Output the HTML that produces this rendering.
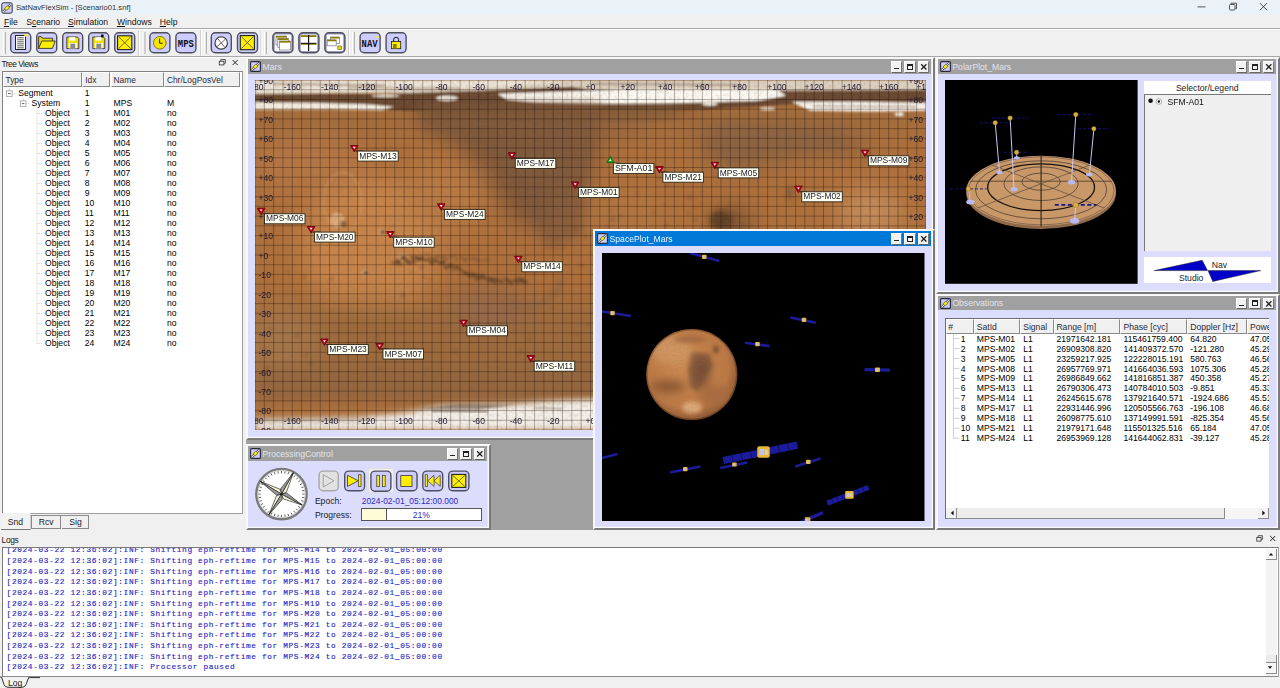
<!DOCTYPE html>
<html><head><meta charset="utf-8">
<style>
*{margin:0;padding:0;box-sizing:border-box}
html,body{width:1280px;height:688px;overflow:hidden;background:#f0f0f0;font-family:"Liberation Sans",sans-serif;font-size:8.5px;color:#000}
.a{position:absolute}
.t{position:absolute;white-space:pre;line-height:1}
.mono{font-family:"Liberation Mono",monospace}
.win{position:absolute;background:#dcdcfc;border-left:2px solid #f4f4f4;border-top:2px solid #f4f4f4;border-right:2px solid #7c7c7c;border-bottom:2px solid #7c7c7c}
.wt{position:absolute;left:0;top:0;height:14.5px;background:#a0a0a0}
.wt.act{background:#0078d7}
.wtt{position:absolute;left:14.5px;top:3.2px;font-size:8.6px;color:#dde2f2;white-space:pre;line-height:1}
.act .wtt{color:#eaf4ff}
.wico{position:absolute;left:2px;top:2px}
.wb{position:absolute;top:2px;width:11px;height:11px;background:#f0f0f0;border-right:1px solid #6a6a6a;border-bottom:1px solid #6a6a6a;border-top:1px solid #fff;border-left:1px solid #fff}

</style></head><body>
<div class="a" style="left:0;top:0;width:1280px;height:15.3px;background:#ebf2f7"></div>
<svg class="a" style="left:1px;top:2px" width="12" height="12" viewBox="0 0 12 12"><rect x="0.8" y="0.8" width="10.4" height="10.4" rx="1.5" fill="#ccccff" stroke="#333" stroke-width="1"/><line x1="2.2" y1="9.8" x2="9.8" y2="2.2" stroke="#222" stroke-width="2.2"/><line x1="2.2" y1="9.8" x2="9.8" y2="2.2" stroke="#f4f4f4" stroke-width="1.1"/><ellipse cx="6" cy="6" rx="2.5" ry="1.8" transform="rotate(-45 6 6)" fill="#f4f000" stroke="#333" stroke-width="0.5"/></svg>
<div class="t" style="left:16px;top:4.2px;font-size:7.65px;color:#333">SatNavFlexSim - [Scenario01.snf]</div>
<svg class="a" style="left:1190px;top:0" width="90" height="15" viewBox="1190 0 90 15"><line x1="1197.5" y1="6.9" x2="1205.5" y2="6.9" stroke="#555" stroke-width="1"/><rect x="1229.5" y="4.5" width="5.5" height="5.5" rx="1" fill="none" stroke="#444" stroke-width="0.9"/><path d="M1231,4.3 L1231,3.2 L1236.5,3.2 L1236.5,8.6 L1235.2,8.6" fill="none" stroke="#444" stroke-width="0.9"/><path d="M1260,3.2 L1267,10.2 M1267,3.2 L1260,10.2" stroke="#333" stroke-width="0.9"/></svg>
<div class="t" style="left:3.9px;top:17.6px;font-size:8.6px;color:#111"><u>F</u>ile</div>
<div class="t" style="left:26.2px;top:17.6px;font-size:8.6px;color:#111">S<u>c</u>enario</div>
<div class="t" style="left:68px;top:17.6px;font-size:8.6px;color:#111"><u>S</u>imulation</div>
<div class="t" style="left:116.9px;top:17.6px;font-size:8.6px;color:#111"><u>W</u>indows</div>
<div class="t" style="left:159.8px;top:17.6px;font-size:8.6px;color:#111"><u>H</u>elp</div>
<div class="a" style="left:0;top:28px;width:1280px;height:1px;background:#a8a8a8"></div>
<div class="a" style="left:0;top:29px;width:1280px;height:1px;background:#fff"></div>
<div class="a" style="left:0;top:56px;width:1280px;height:1px;background:#a8a8a8"></div>
<div class="a" style="left:0;top:57px;width:1280px;height:1px;background:#fff"></div>
<svg class="a" style="left:0;top:0" width="420" height="58" viewBox="0 0 420 58"><rect x="3" y="32" width="3" height="22" fill="#e4e4e4"/><line x1="3.5" y1="32" x2="3.5" y2="54" stroke="#fff"/><line x1="5.5" y1="32" x2="5.5" y2="54" stroke="#b4b4b4"/><rect x="142.5" y="32" width="3" height="22" fill="#e4e4e4"/><line x1="143.0" y1="32" x2="143.0" y2="54" stroke="#fff"/><line x1="145.0" y1="32" x2="145.0" y2="54" stroke="#b4b4b4"/><rect x="204" y="32" width="3" height="22" fill="#e4e4e4"/><line x1="204.5" y1="32" x2="204.5" y2="54" stroke="#fff"/><line x1="206.5" y1="32" x2="206.5" y2="54" stroke="#b4b4b4"/><rect x="264" y="32" width="3" height="22" fill="#e4e4e4"/><line x1="264.5" y1="32" x2="264.5" y2="54" stroke="#fff"/><line x1="266.5" y1="32" x2="266.5" y2="54" stroke="#b4b4b4"/><rect x="352" y="32" width="3" height="22" fill="#e4e4e4"/><line x1="352.5" y1="32" x2="352.5" y2="54" stroke="#fff"/><line x1="354.5" y1="32" x2="354.5" y2="54" stroke="#b4b4b4"/><line x1="138.5" y1="30" x2="138.5" y2="56" stroke="#d0d0d0"/><line x1="139.5" y1="30" x2="139.5" y2="56" stroke="#fff"/><line x1="200.5" y1="30" x2="200.5" y2="56" stroke="#d0d0d0"/><line x1="201.5" y1="30" x2="201.5" y2="56" stroke="#fff"/><line x1="261" y1="30" x2="261" y2="56" stroke="#d0d0d0"/><line x1="262" y1="30" x2="262" y2="56" stroke="#fff"/><line x1="348.5" y1="30" x2="348.5" y2="56" stroke="#d0d0d0"/><line x1="349.5" y1="30" x2="349.5" y2="56" stroke="#fff"/><rect x="10.7" y="32.7" width="20" height="20" rx="4" fill="#ccccff" stroke="#4e4e5e" stroke-width="1.4"/><rect x="15.5" y="35.5" width="10" height="14" fill="#fff" stroke="#222" stroke-width="1"/><line x1="17.2" y1="37.8" x2="23.8" y2="37.8" stroke="#333" stroke-width="0.8"/><line x1="17.2" y1="39.8" x2="23.8" y2="39.8" stroke="#333" stroke-width="0.8"/><line x1="17.2" y1="41.8" x2="23.8" y2="41.8" stroke="#333" stroke-width="0.8"/><line x1="17.2" y1="43.8" x2="23.8" y2="43.8" stroke="#333" stroke-width="0.8"/><line x1="17.2" y1="45.8" x2="23.8" y2="45.8" stroke="#333" stroke-width="0.8"/><line x1="17.2" y1="47.8" x2="23.8" y2="47.8" stroke="#333" stroke-width="0.8"/><circle cx="25.8" cy="35.3" r="1.4" fill="#ffee22"/><rect x="36.7" y="32.7" width="20" height="20" rx="4" fill="#ccccff" stroke="#4e4e5e" stroke-width="1.4"/><path d="M38.6,48.4 L38.6,36.6 L41.2,36.6 L42.2,38.2 L52.6,38.2 L52.6,41 Z" fill="#e8d800" stroke="#333" stroke-width="0.9"/><path d="M38.6,48.4 L41.8,41 L55.2,41 L52.4,48.4 Z" fill="#ffee00" stroke="#333" stroke-width="0.9"/><rect x="62.7" y="32.7" width="20" height="20" rx="4" fill="#ccccff" stroke="#4e4e5e" stroke-width="1.4"/><path d="M66.8,37 L77.3,37 L78.8,38.5 L78.8,48.6 L66.8,48.6 Z" fill="#f0e000" stroke="#333" stroke-width="0.9"/><rect x="69.3" y="37.2" width="6" height="3.4" fill="#fff"/><rect x="68.8" y="43" width="8" height="5.4" fill="#fff"/><rect x="70.3" y="43.6" width="5" height="4.8" fill="#8a8a8a"/><rect x="88.7" y="32.7" width="20" height="20" rx="4" fill="#ccccff" stroke="#4e4e5e" stroke-width="1.4"/><path d="M92.8,37 L103.3,37 L104.8,38.5 L104.8,48.6 L92.8,48.6 Z" fill="#f0e000" stroke="#333" stroke-width="0.9"/><rect x="95.3" y="37.2" width="6" height="3.4" fill="#fff"/><rect x="94.8" y="43" width="8" height="5.4" fill="#fff"/><rect x="96.3" y="43.6" width="5" height="4.8" fill="#8a8a8a"/><circle cx="102.3" cy="35.8" r="1.5" fill="#111"/><rect x="114.7" y="32.7" width="20" height="20" rx="4" fill="#ccccff" stroke="#4e4e5e" stroke-width="1.4"/><rect x="117.6" y="35.8" width="14.200000000000017" height="13.800000000000004" fill="#ffee00" stroke="#222" stroke-width="1.1"/><line x1="118.6" y1="36.8" x2="130.8" y2="48.6" stroke="#333" stroke-width="0.7"/><line x1="130.8" y1="36.8" x2="118.6" y2="48.6" stroke="#333" stroke-width="0.7"/><rect x="149.89999999999998" y="32.7" width="20" height="20" rx="4" fill="#ccccff" stroke="#4e4e5e" stroke-width="1.4"/><circle cx="159.8" cy="42.8" r="6.3" fill="#f4e600" stroke="#7a6e00" stroke-width="0.9"/><path d="M159.6,38.6 L159.6,43.2 L162.6,43.2" fill="none" stroke="#222" stroke-width="1"/><rect x="175.89999999999998" y="32.7" width="20" height="20" rx="4" fill="#ccccff" stroke="#4e4e5e" stroke-width="1.4"/><text x="185.8" y="46.6" text-anchor="middle" font-family="Liberation Mono" font-weight="bold" font-size="10" fill="#111" textLength="16" lengthAdjust="spacingAndGlyphs">MPS</text><rect x="211.29999999999998" y="32.7" width="20" height="20" rx="4" fill="#ccccff" stroke="#4e4e5e" stroke-width="1.4"/><circle cx="221.2" cy="42.9" r="6.2" fill="#fff" stroke="#333" stroke-width="1.1"/><line x1="217" y1="46.5" x2="225.4" y2="39.3" stroke="#444" stroke-width="0.8"/><line x1="218" y1="39" x2="224.5" y2="47" stroke="#444" stroke-width="0.8"/><rect x="237.5" y="32.7" width="20" height="20" rx="4" fill="#ccccff" stroke="#4e4e5e" stroke-width="1.4"/><rect x="240.3" y="35.6" width="14.099999999999994" height="14.100000000000001" fill="#ffee00" stroke="#222" stroke-width="1.1"/><line x1="241.3" y1="36.6" x2="253.4" y2="48.7" stroke="#333" stroke-width="0.7"/><line x1="253.4" y1="36.6" x2="241.3" y2="48.7" stroke="#333" stroke-width="0.7"/><rect x="272.9" y="32.7" width="20" height="20" rx="4" fill="#9a9ac0" stroke="#4e4e5e" stroke-width="1.4"/><rect x="274.7" y="34.5" width="16.5" height="16.5" rx="1.5" fill="#ffffff"/><rect x="276" y="36" width="10.5" height="9" fill="#fff" stroke="#777" stroke-width="0.7"/><rect x="276" y="36" width="10.5" height="1.6" fill="#8a7a00"/><rect x="277.8" y="38.4" width="10.5" height="9" fill="#fff" stroke="#777" stroke-width="0.7"/><rect x="277.8" y="38.4" width="10.5" height="1.6" fill="#8a7a00"/><rect x="279.5" y="41" width="11" height="9" fill="#fff" stroke="#777" stroke-width="0.7"/><rect x="279.5" y="41" width="11" height="1.6" fill="#8a7a00"/><rect x="298.9" y="32.7" width="20" height="20" rx="4" fill="#9a9ac0" stroke="#4e4e5e" stroke-width="1.4"/><rect x="300.7" y="34.5" width="16.5" height="16.5" rx="1.5" fill="#ffffff"/><rect x="300.8" y="35.2" width="15.6" height="1.8" fill="#8a7a00"/><rect x="300.8" y="43" width="15.6" height="1.8" fill="#8a7a00"/><line x1="308.6" y1="35" x2="308.6" y2="51" stroke="#111" stroke-width="1.2"/><line x1="300.8" y1="43.3" x2="316.4" y2="43.3" stroke="#111" stroke-width="1"/><rect x="324.9" y="32.7" width="20" height="20" rx="4" fill="#9a9ac0" stroke="#4e4e5e" stroke-width="1.4"/><rect x="326.7" y="34.5" width="16.5" height="16.5" rx="1.5" fill="#ffffff"/><rect x="330.5" y="37" width="9" height="6.5" fill="#fff" stroke="#777" stroke-width="0.7"/><rect x="330.5" y="37" width="9" height="1.5" fill="#8a7a00"/><rect x="327.2" y="39.8" width="9" height="6" fill="#fff" stroke="#777" stroke-width="0.7"/><rect x="327.2" y="39.8" width="9" height="1.5" fill="#8a7a00"/><rect x="337.8" y="46" width="3.6" height="3.6" fill="#e8d800" stroke="#555" stroke-width="0.6"/><rect x="360.09999999999997" y="32.7" width="20" height="20" rx="4" fill="#ccccff" stroke="#4e4e5e" stroke-width="1.4"/><text x="369.6" y="46.8" text-anchor="middle" font-family="Liberation Mono" font-weight="bold" font-size="10" fill="#111" textLength="16" lengthAdjust="spacingAndGlyphs">NAV</text><path d="M377.5,35.5 L379,37 L377.5,38.5 L376,37 Z" fill="#ffee00"/><rect x="386.09999999999997" y="32.7" width="20" height="20" rx="4" fill="#ccccff" stroke="#4e4e5e" stroke-width="1.4"/><path d="M393.6,42 L393.6,39.6 Q393.6,37.3 396.1,37.3 Q398.6,37.3 398.6,39.6 L398.6,42" fill="none" stroke="#111" stroke-width="1"/><rect x="391.5" y="41.5" width="9.2" height="7.2" fill="#ffee00" stroke="#222" stroke-width="0.8"/><rect x="393" y="44" width="3.6" height="4.4" fill="#8a7d00"/></svg>
<div class="a" style="left:246px;top:57px;width:689px;height:473px;background:#a0a0a0"></div>
<div class="a" style="left:246px;top:57px;width:689px;height:383px;background:#dcdcfc;border-left:2px solid #f8f8f8;border-top:2px solid #f8f8f8;border-right:2px solid #7a7a7a;border-bottom:2px solid #7a7a7a;box-shadow:inset -1.3px -1.3px 0 #fafafa"></div>
<div class="a" style="left:248px;top:59px;width:682.7px;height:14.5px;background:#a0a0a0"></div>
<svg class="a" style="left:250px;top:61px" width="11" height="11" viewBox="0 0 11 11"><rect x="0.6" y="0.6" width="9.8" height="9.8" rx="1" fill="#ccccff" stroke="#2a2a3a" stroke-width="1.1"/><line x1="1.8" y1="9.2" x2="9.2" y2="1.8" stroke="#222" stroke-width="2.2"/><line x1="1.8" y1="9.2" x2="9.2" y2="1.8" stroke="#f4f4f4" stroke-width="1.1"/><ellipse cx="5.5" cy="5.5" rx="2.3" ry="1.7" transform="rotate(-45 5.5 5.5)" fill="#f4f000" stroke="#333" stroke-width="0.5"/></svg>
<div class="t" style="left:262.6px;top:62.9px;font-size:8.6px;color:#e2e4ee">Mars</div>
<div class="a" style="left:890.7px;top:61px;width:11.6px;height:11.6px;background:#f2f2f2;border-top:1px solid #fff;border-left:1px solid #fff;border-right:1px solid #777;border-bottom:1.2px solid #666"></div>
<div class="a" style="left:904.3000000000001px;top:61px;width:11.6px;height:11.6px;background:#f2f2f2;border-top:1px solid #fff;border-left:1px solid #fff;border-right:1px solid #777;border-bottom:1.2px solid #666"></div>
<div class="a" style="left:917.6px;top:61px;width:11.6px;height:11.6px;background:#f2f2f2;border-top:1px solid #fff;border-left:1px solid #fff;border-right:1px solid #777;border-bottom:1.2px solid #666"></div>
<div class="a" style="left:894.3000000000001px;top:68.2px;width:4.4px;height:1.2px;background:#222"></div>
<div class="a" style="left:907.1px;top:63.6px;width:6.4px;height:6.2px;border:1px solid #222;border-top-width:2px"></div>
<svg class="a" style="left:917.6px;top:61px" width="12" height="12" viewBox="0 0 12 12"><path d="M3.2,3.3 L8.4,8.5 M8.4,3.3 L3.2,8.5" stroke="#222" stroke-width="1.3"/></svg><svg class="a" style="left:254.7px;top:80.2px" width="671.0" height="350.0" viewBox="254.7 80.2 671.0 350.0"><defs>
<filter id="b3" x="-20%" y="-20%" width="140%" height="140%"><feGaussianBlur stdDeviation="3"/></filter>
<filter id="b6" x="-20%" y="-20%" width="140%" height="140%"><feGaussianBlur stdDeviation="6"/></filter>
<filter id="b12" x="-30%" y="-30%" width="160%" height="160%"><feGaussianBlur stdDeviation="12"/></filter>
<filter id="b1"><feGaussianBlur stdDeviation="1"/></filter>
<filter id="noise" x="0" y="0" width="100%" height="100%"><feTurbulence type="fractalNoise" baseFrequency="0.35" numOctaves="2" seed="7"/><feColorMatrix values="0 0 0 0 0.3  0 0 0 0 0.18  0 0 0 0 0.08  0 0 0 -2.2 1.2"/></filter>
</defs><rect x="254.7" y="80.2" width="671.0" height="350.0" fill="#ae703c"/><g filter="url(#b12)"><ellipse cx="370.2611111111111" cy="245.47777777777776" rx="70" ry="68" fill="#c6844c"/><ellipse cx="310.6166666666667" cy="161.86666666666667" rx="55" ry="30" fill="#b47644"/><ellipse cx="444.81666666666666" cy="196.86666666666667" rx="40" ry="35" fill="#b87a44"/><ellipse cx="627.4777777777778" cy="226.03333333333336" rx="50" ry="40" fill="#b07440"/><rect x="254.7" y="107.42222222222222" width="671.0" height="27.22222222222223" fill="#a06c3e"/><ellipse cx="552.9222222222222" cy="122.97777777777779" rx="100" ry="12" fill="#8a6040"/><path d="M413.13055555555553,111.31111111111112 L571.5611111111111,111.31111111111112 L599.5194444444444,142.42222222222222 L575.2888888888889,192.97777777777776 L543.6027777777778,227.97777777777776 L511.91666666666663,220.2 L474.6388888888889,161.86666666666667 Z" fill="#80583a"/><path d="M692.713888888889,122.97777777777779 L851.1444444444444,126.86666666666667 L869.7833333333333,154.0888888888889 L795.2277777777779,157.97777777777776 L739.3111111111111,173.53333333333333 L702.0333333333333,157.97777777777776 Z" fill="#8e6440"/><rect x="254.7" y="301.8666666666667" width="671.0" height="97.22222222222223" fill="#9c6a3e"/><ellipse cx="487.68611111111113" cy="309.64444444444445" rx="40" ry="22" fill="#94684a"/><ellipse cx="282.6583333333333" cy="342.7" rx="35" ry="35" fill="#a47448"/><ellipse cx="731.8555555555556" cy="226.03333333333336" rx="16" ry="18" fill="#6a4830"/><ellipse cx="869.7833333333333" cy="212.42222222222222" rx="32" ry="24" fill="#c48c5a"/></g><g filter="url(#b3)"><path d="M720.6722222222222,122.97777777777779 L823.1861111111111,130.75555555555556 L851.1444444444444,148.25555555555556 L776.588888888889,150.2 L729.9916666666667,165.75555555555556 L705.7611111111112,146.31111111111113 Z" fill="#8a6242" opacity="0.7"/><ellipse cx="720.6722222222222" cy="220.2" rx="11" ry="10" fill="#5e4028"/><ellipse cx="789.6361111111112" cy="192.97777777777776" rx="3" ry="7" fill="#7a5638"/><path d="M562.2416666666667,278.53333333333336 Q552.9222222222222,313.53333333333336 506.325,303.81111111111113" stroke="#8a6446" stroke-width="6" fill="none" opacity="0.7"/></g><g filter="url(#b1)"><ellipse cx="342.30277777777775" cy="202.7" rx="19" ry="30" fill="none" stroke="#d09a68" stroke-width="2.5" opacity="0.5"/><circle cx="336.7111111111111" cy="220.2" r="7.5" fill="#dcaa78"/><circle cx="343.2347222222222" cy="224.0888888888889" r="3.2" fill="#7a5234" opacity="0.8"/><circle cx="381.44444444444446" cy="231.86666666666667" r="3.6" fill="#c89868"/><circle cx="382.44444444444446" cy="232.36666666666667" r="1.8" fill="#5e4028"/><circle cx="401.9472222222222" cy="257.14444444444445" r="3.6" fill="#c89868"/><circle cx="402.9472222222222" cy="257.64444444444445" r="1.8" fill="#5e4028"/><circle cx="364.6694444444444" cy="272.7" r="3.6" fill="#c89868"/><circle cx="365.6694444444444" cy="273.2" r="1.8" fill="#5e4028"/><ellipse cx="394.3" cy="263.3" rx="3.8" ry="1.3" transform="rotate(15 394.5 263.0)" fill="#5e4028" opacity="0.6"/><ellipse cx="397.1" cy="261.1" rx="3.0" ry="1.4" transform="rotate(24 396.7 262.6)" fill="#5e4028" opacity="0.6"/><ellipse cx="397.3" cy="261.3" rx="2.2" ry="1.6" transform="rotate(21 398.9 262.3)" fill="#5e4028" opacity="0.6"/><ellipse cx="399.3" cy="264.4" rx="3.9" ry="1.5" transform="rotate(18 401.1 262.0)" fill="#5e4028" opacity="0.6"/><ellipse cx="402.0" cy="259.3" rx="3.1" ry="0.9" transform="rotate(6 403.3 261.7)" fill="#5e4028" opacity="0.6"/><ellipse cx="404.5" cy="259.1" rx="2.9" ry="1.2" transform="rotate(25 405.5 261.5)" fill="#5e4028" opacity="0.6"/><ellipse cx="407.8" cy="261.9" rx="3.0" ry="1.5" transform="rotate(14 407.8 261.2)" fill="#5e4028" opacity="0.6"/><ellipse cx="409.1" cy="263.5" rx="4.0" ry="1.6" transform="rotate(21 410.0 261.0)" fill="#5e4028" opacity="0.6"/><ellipse cx="411.4" cy="259.5" rx="2.6" ry="0.9" transform="rotate(23 412.2 260.8)" fill="#5e4028" opacity="0.6"/><ellipse cx="414.0" cy="262.5" rx="2.8" ry="1.8" transform="rotate(25 414.4 260.7)" fill="#5e4028" opacity="0.6"/><ellipse cx="414.6" cy="259.2" rx="3.8" ry="1.3" transform="rotate(29 416.6 260.7)" fill="#5e4028" opacity="0.6"/><ellipse cx="418.4" cy="258.5" rx="3.3" ry="1.6" transform="rotate(8 418.8 260.6)" fill="#5e4028" opacity="0.6"/><ellipse cx="419.4" cy="259.8" rx="3.9" ry="1.6" transform="rotate(4 421.0 260.7)" fill="#5e4028" opacity="0.6"/><ellipse cx="422.2" cy="258.8" rx="2.1" ry="1.6" transform="rotate(5 423.2 260.8)" fill="#5e4028" opacity="0.6"/><ellipse cx="425.7" cy="260.6" rx="2.4" ry="1.5" transform="rotate(4 425.5 260.9)" fill="#5e4028" opacity="0.6"/><ellipse cx="428.2" cy="259.2" rx="2.8" ry="1.0" transform="rotate(8 427.7 261.1)" fill="#5e4028" opacity="0.6"/><ellipse cx="431.8" cy="262.9" rx="2.6" ry="1.7" transform="rotate(6 429.9 261.4)" fill="#5e4028" opacity="0.6"/><ellipse cx="431.7" cy="263.5" rx="3.3" ry="0.9" transform="rotate(30 432.1 261.7)" fill="#5e4028" opacity="0.6"/><ellipse cx="433.1" cy="260.9" rx="3.5" ry="1.1" transform="rotate(9 434.3 262.1)" fill="#5e4028" opacity="0.6"/><ellipse cx="434.8" cy="260.5" rx="3.2" ry="1.0" transform="rotate(18 436.5 262.5)" fill="#5e4028" opacity="0.6"/><ellipse cx="438.2" cy="262.8" rx="3.9" ry="1.3" transform="rotate(17 438.7 263.0)" fill="#5e4028" opacity="0.6"/><ellipse cx="442.4" cy="262.0" rx="2.3" ry="1.7" transform="rotate(25 440.9 263.6)" fill="#5e4028" opacity="0.6"/><ellipse cx="442.1" cy="262.6" rx="3.5" ry="1.7" transform="rotate(6 443.1 264.2)" fill="#5e4028" opacity="0.6"/><ellipse cx="447.2" cy="266.8" rx="3.2" ry="1.2" transform="rotate(3 445.4 264.8)" fill="#5e4028" opacity="0.6"/><ellipse cx="445.7" cy="267.9" rx="2.5" ry="1.5" transform="rotate(8 447.6 265.5)" fill="#5e4028" opacity="0.6"/><ellipse cx="451.1" cy="266.8" rx="2.6" ry="1.0" transform="rotate(22 449.8 266.3)" fill="#5e4028" opacity="0.6"/><ellipse cx="450.3" cy="265.7" rx="3.1" ry="1.7" transform="rotate(18 452.0 267.0)" fill="#5e4028" opacity="0.6"/><ellipse cx="453.3" cy="269.9" rx="2.4" ry="0.8" transform="rotate(8 454.2 267.8)" fill="#5e4028" opacity="0.6"/><ellipse cx="456.2" cy="266.5" rx="2.4" ry="1.2" transform="rotate(17 456.4 268.7)" fill="#5e4028" opacity="0.6"/><ellipse cx="457.1" cy="268.8" rx="3.8" ry="1.8" transform="rotate(20 458.6 269.5)" fill="#5e4028" opacity="0.6"/><ellipse cx="461.6" cy="270.8" rx="2.3" ry="0.8" transform="rotate(1 460.8 270.4)" fill="#5e4028" opacity="0.6"/><ellipse cx="464.7" cy="272.2" rx="3.9" ry="0.8" transform="rotate(19 463.0 271.2)" fill="#5e4028" opacity="0.6"/><ellipse cx="465.2" cy="273.2" rx="2.6" ry="1.8" transform="rotate(2 465.3 272.1)" fill="#5e4028" opacity="0.6"/><ellipse cx="467.7" cy="274.1" rx="3.8" ry="1.5" transform="rotate(21 467.5 272.9)" fill="#5e4028" opacity="0.6"/><ellipse cx="470.9" cy="275.8" rx="2.7" ry="1.5" transform="rotate(27 469.7 273.8)" fill="#5e4028" opacity="0.6"/><ellipse cx="473.4" cy="274.2" rx="3.6" ry="1.7" transform="rotate(17 471.9 274.6)" fill="#5e4028" opacity="0.6"/><ellipse cx="474.6" cy="274.8" rx="3.2" ry="1.4" transform="rotate(2 474.1 275.4)" fill="#5e4028" opacity="0.6"/><ellipse cx="476.9" cy="278.6" rx="3.8" ry="1.5" transform="rotate(12 476.3 276.1)" fill="#5e4028" opacity="0.6"/><ellipse cx="479.5" cy="277.3" rx="2.9" ry="1.6" transform="rotate(3 478.5 276.9)" fill="#5e4028" opacity="0.6"/><ellipse cx="481.7" cy="275.2" rx="3.2" ry="1.3" transform="rotate(7 480.7 277.5)" fill="#5e4028" opacity="0.6"/><ellipse cx="483.7" cy="278.2" rx="3.2" ry="1.7" transform="rotate(8 482.9 278.2)" fill="#5e4028" opacity="0.6"/><ellipse cx="483.2" cy="277.8" rx="3.4" ry="1.0" transform="rotate(5 485.2 278.8)" fill="#5e4028" opacity="0.6"/><ellipse cx="489.0" cy="280.1" rx="2.9" ry="1.7" transform="rotate(10 487.4 279.3)" fill="#5e4028" opacity="0.6"/><ellipse cx="490.2" cy="278.3" rx="2.9" ry="1.6" transform="rotate(27 489.6 279.8)" fill="#5e4028" opacity="0.6"/><ellipse cx="493.3" cy="279.7" rx="3.2" ry="1.1" transform="rotate(4 491.8 280.2)" fill="#5e4028" opacity="0.6"/><ellipse cx="494.0" cy="282.3" rx="3.7" ry="1.5" transform="rotate(29 494.0 280.6)" fill="#5e4028" opacity="0.6"/><ellipse cx="495.3" cy="279.3" rx="2.9" ry="1.1" transform="rotate(6 496.2 280.9)" fill="#5e4028" opacity="0.6"/><ellipse cx="498.1" cy="281.8" rx="3.0" ry="1.1" transform="rotate(25 498.4 281.2)" fill="#5e4028" opacity="0.6"/><ellipse cx="502.6" cy="281.1" rx="2.1" ry="0.8" transform="rotate(26 500.6 281.4)" fill="#5e4028" opacity="0.6"/><ellipse cx="501.0" cy="282.6" rx="3.1" ry="1.1" transform="rotate(24 502.8 281.5)" fill="#5e4028" opacity="0.6"/><ellipse cx="503.1" cy="279.8" rx="2.9" ry="0.8" transform="rotate(25 505.1 281.6)" fill="#5e4028" opacity="0.6"/><ellipse cx="506.2" cy="279.8" rx="2.1" ry="1.4" transform="rotate(13 507.3 281.6)" fill="#5e4028" opacity="0.6"/><ellipse cx="510.0" cy="282.4" rx="3.6" ry="1.8" transform="rotate(21 509.5 281.6)" fill="#5e4028" opacity="0.6"/><ellipse cx="510.5" cy="281.4" rx="2.4" ry="0.8" transform="rotate(14 511.7 281.5)" fill="#5e4028" opacity="0.6"/><ellipse cx="514.8" cy="279.8" rx="2.5" ry="1.1" transform="rotate(21 513.9 281.4)" fill="#5e4028" opacity="0.6"/><ellipse cx="516.2" cy="281.8" rx="3.5" ry="1.2" transform="rotate(24 516.1 281.2)" fill="#5e4028" opacity="0.6"/><ellipse cx="520.0" cy="278.9" rx="3.9" ry="1.5" transform="rotate(4 518.3 281.0)" fill="#5e4028" opacity="0.6"/><ellipse cx="520.4" cy="281.4" rx="3.8" ry="1.2" transform="rotate(17 520.5 280.7)" fill="#5e4028" opacity="0.6"/><ellipse cx="524.3" cy="281.9" rx="3.9" ry="1.3" transform="rotate(20 522.8 280.5)" fill="#5e4028" opacity="0.6"/><ellipse cx="523.8" cy="281.3" rx="3.6" ry="1.4" transform="rotate(22 525.0 280.2)" fill="#5e4028" opacity="0.6"/><ellipse cx="412.0" cy="256.8" rx="3.0" ry="1.4" fill="#6a4a32" opacity="0.5"/><ellipse cx="416.4" cy="256.6" rx="2.0" ry="1.3" fill="#6a4a32" opacity="0.5"/><ellipse cx="420.8" cy="255.1" rx="1.6" ry="1.0" fill="#6a4a32" opacity="0.5"/><ellipse cx="422.7" cy="257.0" rx="2.2" ry="0.7" fill="#6a4a32" opacity="0.5"/><ellipse cx="426.8" cy="254.4" rx="2.7" ry="0.8" fill="#6a4a32" opacity="0.5"/><ellipse cx="428.0" cy="257.6" rx="1.7" ry="0.8" fill="#6a4a32" opacity="0.5"/><ellipse cx="431.8" cy="257.6" rx="2.8" ry="1.2" fill="#6a4a32" opacity="0.5"/><ellipse cx="436.7" cy="256.9" rx="2.9" ry="0.8" fill="#6a4a32" opacity="0.5"/><ellipse cx="436.9" cy="257.3" rx="1.9" ry="1.2" fill="#6a4a32" opacity="0.5"/><ellipse cx="441.6" cy="257.5" rx="2.8" ry="1.1" fill="#6a4a32" opacity="0.5"/><ellipse cx="443.4" cy="257.2" rx="2.8" ry="1.3" fill="#6a4a32" opacity="0.5"/><ellipse cx="446.1" cy="259.3" rx="3.0" ry="1.1" fill="#6a4a32" opacity="0.5"/><ellipse cx="450.7" cy="256.9" rx="2.3" ry="1.1" fill="#6a4a32" opacity="0.5"/><ellipse cx="453.9" cy="256.5" rx="3.0" ry="1.1" fill="#6a4a32" opacity="0.5"/><ellipse cx="456.2" cy="259.8" rx="2.3" ry="1.0" fill="#6a4a32" opacity="0.5"/><ellipse cx="460.5" cy="257.1" rx="2.3" ry="1.0" fill="#6a4a32" opacity="0.5"/><ellipse cx="464.7" cy="260.8" rx="1.9" ry="1.0" fill="#6a4a32" opacity="0.5"/><ellipse cx="464.4" cy="259.1" rx="2.7" ry="1.3" fill="#6a4a32" opacity="0.5"/><ellipse cx="469.0" cy="258.8" rx="1.8" ry="1.1" fill="#6a4a32" opacity="0.5"/><ellipse cx="473.9" cy="258.3" rx="2.7" ry="0.7" fill="#6a4a32" opacity="0.5"/><ellipse cx="474.0" cy="259.0" rx="2.5" ry="0.9" fill="#6a4a32" opacity="0.5"/><ellipse cx="477.8" cy="260.8" rx="1.7" ry="1.2" fill="#6a4a32" opacity="0.5"/><ellipse cx="480.0" cy="260.6" rx="1.9" ry="0.8" fill="#6a4a32" opacity="0.5"/><ellipse cx="484.7" cy="260.5" rx="2.1" ry="1.0" fill="#6a4a32" opacity="0.5"/><ellipse cx="487.8" cy="259.7" rx="1.8" ry="1.1" fill="#6a4a32" opacity="0.5"/><circle cx="683.1" cy="326.2" r="1.9" fill="#7a5032" opacity="0.5"/><circle cx="682.5" cy="325.6" r="1.3" fill="#c08c60" opacity="0.3"/><circle cx="829.6" cy="364.9" r="2.3" fill="#7a5032" opacity="0.5"/><circle cx="829.0" cy="364.3" r="1.6" fill="#c08c60" opacity="0.3"/><circle cx="860.4" cy="354.0" r="2.5" fill="#7a5032" opacity="0.5"/><circle cx="859.8" cy="353.4" r="1.7" fill="#c08c60" opacity="0.3"/><circle cx="401.1" cy="265.1" r="1.0" fill="#7a5032" opacity="0.5"/><circle cx="400.5" cy="264.5" r="0.7" fill="#c08c60" opacity="0.3"/><circle cx="567.4" cy="190.5" r="1.6" fill="#7a5032" opacity="0.5"/><circle cx="566.8" cy="189.9" r="1.1" fill="#c08c60" opacity="0.3"/><circle cx="784.7" cy="378.8" r="2.0" fill="#7a5032" opacity="0.5"/><circle cx="784.1" cy="378.2" r="1.4" fill="#c08c60" opacity="0.3"/><circle cx="266.6" cy="369.0" r="2.4" fill="#7a5032" opacity="0.5"/><circle cx="266.0" cy="368.4" r="1.7" fill="#c08c60" opacity="0.3"/><circle cx="904.5" cy="380.2" r="2.2" fill="#7a5032" opacity="0.5"/><circle cx="903.9" cy="379.6" r="1.5" fill="#c08c60" opacity="0.3"/><circle cx="563.4" cy="246.9" r="0.9" fill="#7a5032" opacity="0.5"/><circle cx="562.8" cy="246.3" r="0.6" fill="#c08c60" opacity="0.3"/><circle cx="624.9" cy="328.1" r="1.1" fill="#7a5032" opacity="0.5"/><circle cx="624.3" cy="327.5" r="0.7" fill="#c08c60" opacity="0.3"/><circle cx="378.5" cy="368.6" r="2.6" fill="#7a5032" opacity="0.5"/><circle cx="377.9" cy="368.0" r="1.8" fill="#c08c60" opacity="0.3"/><circle cx="694.8" cy="219.3" r="2.2" fill="#7a5032" opacity="0.5"/><circle cx="694.2" cy="218.7" r="1.5" fill="#c08c60" opacity="0.3"/><circle cx="474.0" cy="334.4" r="1.6" fill="#7a5032" opacity="0.5"/><circle cx="473.4" cy="333.8" r="1.1" fill="#c08c60" opacity="0.3"/><circle cx="657.9" cy="393.5" r="2.3" fill="#7a5032" opacity="0.5"/><circle cx="657.3" cy="392.9" r="1.6" fill="#c08c60" opacity="0.3"/><circle cx="376.3" cy="336.1" r="1.5" fill="#7a5032" opacity="0.5"/><circle cx="375.7" cy="335.5" r="1.1" fill="#c08c60" opacity="0.3"/><circle cx="385.6" cy="373.7" r="0.8" fill="#7a5032" opacity="0.5"/><circle cx="385.0" cy="373.1" r="0.6" fill="#c08c60" opacity="0.3"/><circle cx="854.0" cy="290.8" r="2.3" fill="#7a5032" opacity="0.5"/><circle cx="853.4" cy="290.2" r="1.6" fill="#c08c60" opacity="0.3"/><circle cx="677.0" cy="342.5" r="1.7" fill="#7a5032" opacity="0.5"/><circle cx="676.4" cy="341.9" r="1.2" fill="#c08c60" opacity="0.3"/><circle cx="688.8" cy="197.3" r="2.2" fill="#7a5032" opacity="0.5"/><circle cx="688.2" cy="196.7" r="1.5" fill="#c08c60" opacity="0.3"/><circle cx="801.3" cy="342.4" r="2.4" fill="#7a5032" opacity="0.5"/><circle cx="800.7" cy="341.8" r="1.7" fill="#c08c60" opacity="0.3"/><circle cx="720.9" cy="295.2" r="1.5" fill="#7a5032" opacity="0.5"/><circle cx="720.3" cy="294.6" r="1.1" fill="#c08c60" opacity="0.3"/><circle cx="739.6" cy="386.0" r="1.6" fill="#7a5032" opacity="0.5"/><circle cx="739.0" cy="385.4" r="1.2" fill="#c08c60" opacity="0.3"/><circle cx="261.8" cy="348.9" r="1.9" fill="#7a5032" opacity="0.5"/><circle cx="261.2" cy="348.3" r="1.3" fill="#c08c60" opacity="0.3"/><circle cx="410.4" cy="272.1" r="1.4" fill="#7a5032" opacity="0.5"/><circle cx="409.8" cy="271.5" r="1.0" fill="#c08c60" opacity="0.3"/><circle cx="697.4" cy="321.0" r="1.5" fill="#7a5032" opacity="0.5"/><circle cx="696.8" cy="320.4" r="1.1" fill="#c08c60" opacity="0.3"/><circle cx="925.6" cy="311.5" r="2.2" fill="#7a5032" opacity="0.5"/><circle cx="925.0" cy="310.9" r="1.5" fill="#c08c60" opacity="0.3"/><circle cx="912.3" cy="392.2" r="2.1" fill="#7a5032" opacity="0.5"/><circle cx="911.7" cy="391.6" r="1.5" fill="#c08c60" opacity="0.3"/><circle cx="582.1" cy="226.0" r="1.0" fill="#7a5032" opacity="0.5"/><circle cx="581.5" cy="225.4" r="0.7" fill="#c08c60" opacity="0.3"/><circle cx="423.0" cy="277.2" r="1.7" fill="#7a5032" opacity="0.5"/><circle cx="422.4" cy="276.6" r="1.2" fill="#c08c60" opacity="0.3"/><circle cx="903.6" cy="321.2" r="1.9" fill="#7a5032" opacity="0.5"/><circle cx="903.0" cy="320.6" r="1.4" fill="#c08c60" opacity="0.3"/><circle cx="797.9" cy="385.3" r="2.2" fill="#7a5032" opacity="0.5"/><circle cx="797.3" cy="384.7" r="1.5" fill="#c08c60" opacity="0.3"/><circle cx="623.3" cy="242.0" r="1.7" fill="#7a5032" opacity="0.5"/><circle cx="622.7" cy="241.4" r="1.2" fill="#c08c60" opacity="0.3"/><circle cx="664.8" cy="387.6" r="1.6" fill="#7a5032" opacity="0.5"/><circle cx="664.2" cy="387.0" r="1.1" fill="#c08c60" opacity="0.3"/><circle cx="608.2" cy="317.3" r="1.3" fill="#7a5032" opacity="0.5"/><circle cx="607.6" cy="316.7" r="0.9" fill="#c08c60" opacity="0.3"/><circle cx="659.8" cy="232.2" r="0.8" fill="#7a5032" opacity="0.5"/><circle cx="659.2" cy="231.6" r="0.6" fill="#c08c60" opacity="0.3"/><circle cx="665.4" cy="224.9" r="2.4" fill="#7a5032" opacity="0.5"/><circle cx="664.8" cy="224.3" r="1.7" fill="#c08c60" opacity="0.3"/><circle cx="756.9" cy="388.7" r="2.5" fill="#7a5032" opacity="0.5"/><circle cx="756.3" cy="388.1" r="1.8" fill="#c08c60" opacity="0.3"/><circle cx="304.0" cy="277.2" r="1.7" fill="#7a5032" opacity="0.5"/><circle cx="303.4" cy="276.6" r="1.2" fill="#c08c60" opacity="0.3"/><circle cx="907.7" cy="363.5" r="2.5" fill="#7a5032" opacity="0.5"/><circle cx="907.1" cy="362.9" r="1.7" fill="#c08c60" opacity="0.3"/><circle cx="739.7" cy="334.2" r="2.3" fill="#7a5032" opacity="0.5"/><circle cx="739.1" cy="333.6" r="1.6" fill="#c08c60" opacity="0.3"/><circle cx="659.7" cy="380.2" r="1.6" fill="#7a5032" opacity="0.5"/><circle cx="659.1" cy="379.6" r="1.1" fill="#c08c60" opacity="0.3"/><circle cx="391.4" cy="388.4" r="1.0" fill="#7a5032" opacity="0.5"/><circle cx="390.8" cy="387.8" r="0.7" fill="#c08c60" opacity="0.3"/><circle cx="551.9" cy="308.2" r="1.3" fill="#7a5032" opacity="0.5"/><circle cx="551.3" cy="307.6" r="0.9" fill="#c08c60" opacity="0.3"/><circle cx="645.4" cy="340.5" r="1.8" fill="#7a5032" opacity="0.5"/><circle cx="644.8" cy="339.9" r="1.2" fill="#c08c60" opacity="0.3"/><circle cx="924.1" cy="271.1" r="1.2" fill="#7a5032" opacity="0.5"/><circle cx="923.5" cy="270.5" r="0.9" fill="#c08c60" opacity="0.3"/><circle cx="331.1" cy="278.9" r="1.9" fill="#7a5032" opacity="0.5"/><circle cx="330.5" cy="278.3" r="1.3" fill="#c08c60" opacity="0.3"/><circle cx="495.7" cy="359.8" r="1.8" fill="#7a5032" opacity="0.5"/><circle cx="495.1" cy="359.2" r="1.3" fill="#c08c60" opacity="0.3"/><circle cx="651.7" cy="312.7" r="1.1" fill="#7a5032" opacity="0.5"/><circle cx="651.1" cy="312.1" r="0.8" fill="#c08c60" opacity="0.3"/><circle cx="421.8" cy="267.6" r="2.4" fill="#7a5032" opacity="0.5"/><circle cx="421.2" cy="267.0" r="1.7" fill="#c08c60" opacity="0.3"/><circle cx="616.3" cy="206.7" r="1.0" fill="#7a5032" opacity="0.5"/><circle cx="615.7" cy="206.1" r="0.7" fill="#c08c60" opacity="0.3"/><circle cx="653.8" cy="212.4" r="1.9" fill="#7a5032" opacity="0.5"/><circle cx="653.2" cy="211.8" r="1.4" fill="#c08c60" opacity="0.3"/><circle cx="604.2" cy="197.3" r="2.3" fill="#7a5032" opacity="0.5"/><circle cx="603.6" cy="196.7" r="1.6" fill="#c08c60" opacity="0.3"/><circle cx="304.6" cy="379.6" r="1.9" fill="#7a5032" opacity="0.5"/><circle cx="304.0" cy="379.0" r="1.3" fill="#c08c60" opacity="0.3"/><circle cx="770.5" cy="367.4" r="1.3" fill="#7a5032" opacity="0.5"/><circle cx="769.9" cy="366.8" r="0.9" fill="#c08c60" opacity="0.3"/><circle cx="798.1" cy="347.1" r="2.6" fill="#7a5032" opacity="0.5"/><circle cx="797.5" cy="346.5" r="1.8" fill="#c08c60" opacity="0.3"/><circle cx="473.0" cy="323.7" r="2.5" fill="#7a5032" opacity="0.5"/><circle cx="472.4" cy="323.1" r="1.7" fill="#c08c60" opacity="0.3"/><circle cx="683.4" cy="249.1" r="0.9" fill="#7a5032" opacity="0.5"/><circle cx="682.8" cy="248.5" r="0.7" fill="#c08c60" opacity="0.3"/><circle cx="633.3" cy="332.0" r="1.3" fill="#7a5032" opacity="0.5"/><circle cx="632.7" cy="331.4" r="0.9" fill="#c08c60" opacity="0.3"/><circle cx="651.6" cy="248.8" r="1.3" fill="#7a5032" opacity="0.5"/><circle cx="651.0" cy="248.2" r="0.9" fill="#c08c60" opacity="0.3"/><circle cx="574.2" cy="227.4" r="2.1" fill="#7a5032" opacity="0.5"/><circle cx="573.6" cy="226.8" r="1.5" fill="#c08c60" opacity="0.3"/><circle cx="500.6" cy="379.9" r="1.8" fill="#7a5032" opacity="0.5"/><circle cx="500.0" cy="379.3" r="1.3" fill="#c08c60" opacity="0.3"/><circle cx="871.1" cy="272.7" r="1.6" fill="#7a5032" opacity="0.5"/><circle cx="870.5" cy="272.1" r="1.1" fill="#c08c60" opacity="0.3"/><circle cx="793.5" cy="355.5" r="1.5" fill="#7a5032" opacity="0.5"/><circle cx="792.9" cy="354.9" r="1.1" fill="#c08c60" opacity="0.3"/><circle cx="606.9" cy="226.8" r="1.5" fill="#7a5032" opacity="0.5"/><circle cx="606.3" cy="226.2" r="1.0" fill="#c08c60" opacity="0.3"/><circle cx="637.0" cy="193.2" r="1.8" fill="#7a5032" opacity="0.5"/><circle cx="636.4" cy="192.6" r="1.2" fill="#c08c60" opacity="0.3"/><circle cx="666.1" cy="186.7" r="1.3" fill="#7a5032" opacity="0.5"/><circle cx="665.5" cy="186.1" r="0.9" fill="#c08c60" opacity="0.3"/><circle cx="269.6" cy="328.0" r="1.8" fill="#7a5032" opacity="0.5"/><circle cx="269.0" cy="327.4" r="1.3" fill="#c08c60" opacity="0.3"/><circle cx="903.2" cy="310.4" r="0.9" fill="#7a5032" opacity="0.5"/><circle cx="902.6" cy="309.8" r="0.6" fill="#c08c60" opacity="0.3"/><circle cx="565.1" cy="197.9" r="2.4" fill="#7a5032" opacity="0.5"/><circle cx="564.5" cy="197.3" r="1.7" fill="#c08c60" opacity="0.3"/><circle cx="664.1" cy="204.7" r="1.2" fill="#7a5032" opacity="0.5"/><circle cx="663.5" cy="204.1" r="0.9" fill="#c08c60" opacity="0.3"/><circle cx="402.6" cy="295.5" r="2.2" fill="#7a5032" opacity="0.5"/><circle cx="402.0" cy="294.9" r="1.5" fill="#c08c60" opacity="0.3"/><circle cx="519.3" cy="351.2" r="2.0" fill="#7a5032" opacity="0.5"/><circle cx="518.7" cy="350.6" r="1.4" fill="#c08c60" opacity="0.3"/><circle cx="585.9" cy="325.2" r="2.1" fill="#7a5032" opacity="0.5"/><circle cx="585.3" cy="324.6" r="1.5" fill="#c08c60" opacity="0.3"/><circle cx="868.6" cy="341.7" r="2.0" fill="#7a5032" opacity="0.5"/><circle cx="868.0" cy="341.1" r="1.4" fill="#c08c60" opacity="0.3"/><circle cx="827.4" cy="290.2" r="2.4" fill="#7a5032" opacity="0.5"/><circle cx="826.8" cy="289.6" r="1.7" fill="#c08c60" opacity="0.3"/><circle cx="897.4" cy="311.8" r="2.1" fill="#7a5032" opacity="0.5"/><circle cx="896.8" cy="311.2" r="1.5" fill="#c08c60" opacity="0.3"/><circle cx="793.0" cy="340.3" r="1.1" fill="#7a5032" opacity="0.5"/><circle cx="792.4" cy="339.7" r="0.7" fill="#c08c60" opacity="0.3"/><circle cx="752.1" cy="266.1" r="1.1" fill="#7a5032" opacity="0.5"/><circle cx="751.5" cy="265.5" r="0.8" fill="#c08c60" opacity="0.3"/><circle cx="697.5" cy="250.6" r="1.4" fill="#7a5032" opacity="0.5"/><circle cx="696.9" cy="250.0" r="0.9" fill="#c08c60" opacity="0.3"/><circle cx="331.7" cy="310.8" r="1.1" fill="#7a5032" opacity="0.5"/><circle cx="331.1" cy="310.2" r="0.8" fill="#c08c60" opacity="0.3"/><circle cx="296.5" cy="335.4" r="2.4" fill="#7a5032" opacity="0.5"/><circle cx="295.9" cy="334.8" r="1.7" fill="#c08c60" opacity="0.3"/><circle cx="585.3" cy="236.9" r="2.1" fill="#7a5032" opacity="0.5"/><circle cx="584.7" cy="236.3" r="1.5" fill="#c08c60" opacity="0.3"/><circle cx="594.8" cy="241.8" r="2.2" fill="#7a5032" opacity="0.5"/><circle cx="594.2" cy="241.2" r="1.5" fill="#c08c60" opacity="0.3"/><circle cx="463.9" cy="323.8" r="1.7" fill="#7a5032" opacity="0.5"/><circle cx="463.3" cy="323.2" r="1.2" fill="#c08c60" opacity="0.3"/><circle cx="429.5" cy="279.6" r="1.4" fill="#7a5032" opacity="0.5"/><circle cx="428.9" cy="279.0" r="1.0" fill="#c08c60" opacity="0.3"/><circle cx="622.0" cy="270.5" r="1.2" fill="#7a5032" opacity="0.5"/><circle cx="621.4" cy="269.9" r="0.8" fill="#c08c60" opacity="0.3"/><circle cx="288.1" cy="271.8" r="1.5" fill="#7a5032" opacity="0.5"/><circle cx="287.5" cy="271.2" r="1.0" fill="#c08c60" opacity="0.3"/><circle cx="700.6" cy="204.1" r="1.2" fill="#7a5032" opacity="0.5"/><circle cx="700.0" cy="203.5" r="0.9" fill="#c08c60" opacity="0.3"/><circle cx="262.0" cy="333.6" r="2.2" fill="#7a5032" opacity="0.5"/><circle cx="261.4" cy="333.0" r="1.6" fill="#c08c60" opacity="0.3"/><circle cx="576.3" cy="230.2" r="1.3" fill="#7a5032" opacity="0.5"/><circle cx="575.7" cy="229.6" r="0.9" fill="#c08c60" opacity="0.3"/><circle cx="838.0" cy="328.0" r="2.6" fill="#7a5032" opacity="0.5"/><circle cx="837.4" cy="327.4" r="1.8" fill="#c08c60" opacity="0.3"/><circle cx="667.8" cy="255.1" r="2.3" fill="#7a5032" opacity="0.5"/><circle cx="667.2" cy="254.5" r="1.6" fill="#c08c60" opacity="0.3"/><circle cx="593.2" cy="199.5" r="1.0" fill="#7a5032" opacity="0.5"/><circle cx="592.6" cy="198.9" r="0.7" fill="#c08c60" opacity="0.3"/><circle cx="576.8" cy="334.1" r="1.9" fill="#7a5032" opacity="0.5"/><circle cx="576.2" cy="333.5" r="1.3" fill="#c08c60" opacity="0.3"/><circle cx="830.0" cy="355.6" r="1.6" fill="#7a5032" opacity="0.5"/><circle cx="829.4" cy="355.0" r="1.1" fill="#c08c60" opacity="0.3"/><circle cx="869.8" cy="383.4" r="1.2" fill="#7a5032" opacity="0.5"/><circle cx="869.2" cy="382.8" r="0.8" fill="#c08c60" opacity="0.3"/><circle cx="677.0" cy="231.0" r="1.4" fill="#7a5032" opacity="0.5"/><circle cx="676.4" cy="230.4" r="1.0" fill="#c08c60" opacity="0.3"/><circle cx="305.7" cy="355.4" r="2.1" fill="#7a5032" opacity="0.5"/><circle cx="305.1" cy="354.8" r="1.5" fill="#c08c60" opacity="0.3"/><circle cx="611.7" cy="219.3" r="2.5" fill="#7a5032" opacity="0.5"/><circle cx="611.1" cy="218.7" r="1.8" fill="#c08c60" opacity="0.3"/><circle cx="609.2" cy="200.0" r="1.2" fill="#7a5032" opacity="0.5"/><circle cx="608.6" cy="199.4" r="0.9" fill="#c08c60" opacity="0.3"/><circle cx="700.8" cy="193.0" r="1.2" fill="#7a5032" opacity="0.5"/><circle cx="700.2" cy="192.4" r="0.8" fill="#c08c60" opacity="0.3"/><circle cx="668.1" cy="357.4" r="1.8" fill="#7a5032" opacity="0.5"/><circle cx="667.5" cy="356.8" r="1.2" fill="#c08c60" opacity="0.3"/><circle cx="454.8" cy="351.2" r="2.0" fill="#7a5032" opacity="0.5"/><circle cx="454.2" cy="350.6" r="1.4" fill="#c08c60" opacity="0.3"/><circle cx="426.8" cy="369.2" r="1.4" fill="#7a5032" opacity="0.5"/><circle cx="426.2" cy="368.6" r="1.0" fill="#c08c60" opacity="0.3"/><circle cx="888.8" cy="321.9" r="1.4" fill="#7a5032" opacity="0.5"/><circle cx="888.2" cy="321.3" r="1.0" fill="#c08c60" opacity="0.3"/><circle cx="567.0" cy="202.5" r="2.1" fill="#7a5032" opacity="0.5"/><circle cx="566.4" cy="201.9" r="1.5" fill="#c08c60" opacity="0.3"/><circle cx="375.4" cy="342.8" r="1.9" fill="#7a5032" opacity="0.5"/><circle cx="374.8" cy="342.2" r="1.3" fill="#c08c60" opacity="0.3"/><circle cx="571.4" cy="223.6" r="0.9" fill="#7a5032" opacity="0.5"/><circle cx="570.8" cy="223.0" r="0.7" fill="#c08c60" opacity="0.3"/><circle cx="872.4" cy="339.6" r="2.0" fill="#7a5032" opacity="0.5"/><circle cx="871.8" cy="339.0" r="1.4" fill="#c08c60" opacity="0.3"/><circle cx="769.3" cy="288.2" r="1.4" fill="#7a5032" opacity="0.5"/><circle cx="768.7" cy="287.6" r="1.0" fill="#c08c60" opacity="0.3"/><circle cx="531.2" cy="393.2" r="2.1" fill="#7a5032" opacity="0.5"/><circle cx="530.6" cy="392.6" r="1.4" fill="#c08c60" opacity="0.3"/><circle cx="913.6" cy="292.3" r="1.9" fill="#7a5032" opacity="0.5"/><circle cx="913.0" cy="291.7" r="1.3" fill="#c08c60" opacity="0.3"/><circle cx="267.1" cy="352.1" r="2.0" fill="#7a5032" opacity="0.5"/><circle cx="266.5" cy="351.5" r="1.4" fill="#c08c60" opacity="0.3"/><circle cx="326.0" cy="346.0" r="2.2" fill="#7a5032" opacity="0.5"/><circle cx="325.4" cy="345.4" r="1.6" fill="#c08c60" opacity="0.3"/><circle cx="667.2" cy="185.0" r="1.8" fill="#7a5032" opacity="0.5"/><circle cx="666.6" cy="184.4" r="1.3" fill="#c08c60" opacity="0.3"/><circle cx="659.3" cy="178.5" r="1.7" fill="#7a5032" opacity="0.5"/><circle cx="658.7" cy="177.9" r="1.2" fill="#c08c60" opacity="0.3"/><circle cx="693.8" cy="206.4" r="1.2" fill="#7a5032" opacity="0.5"/><circle cx="693.2" cy="205.8" r="0.8" fill="#c08c60" opacity="0.3"/><circle cx="310.6" cy="363.3" r="2.1" fill="#7a5032" opacity="0.5"/><circle cx="310.0" cy="362.7" r="1.4" fill="#c08c60" opacity="0.3"/><circle cx="475.6" cy="274.2" r="1.6" fill="#7a5032" opacity="0.5"/><circle cx="475.0" cy="273.6" r="1.1" fill="#c08c60" opacity="0.3"/><circle cx="687.7" cy="212.9" r="1.8" fill="#7a5032" opacity="0.5"/><circle cx="687.1" cy="212.3" r="1.3" fill="#c08c60" opacity="0.3"/><circle cx="630.7" cy="360.8" r="2.6" fill="#7a5032" opacity="0.5"/><circle cx="630.1" cy="360.2" r="1.8" fill="#c08c60" opacity="0.3"/><circle cx="675.9" cy="232.8" r="2.4" fill="#7a5032" opacity="0.5"/><circle cx="675.3" cy="232.2" r="1.7" fill="#c08c60" opacity="0.3"/><circle cx="416.3" cy="320.5" r="1.1" fill="#7a5032" opacity="0.5"/><circle cx="415.7" cy="319.9" r="0.8" fill="#c08c60" opacity="0.3"/><circle cx="579.8" cy="178.4" r="2.5" fill="#7a5032" opacity="0.5"/><circle cx="579.2" cy="177.8" r="1.7" fill="#c08c60" opacity="0.3"/><circle cx="696.5" cy="355.1" r="2.1" fill="#7a5032" opacity="0.5"/><circle cx="695.9" cy="354.5" r="1.5" fill="#c08c60" opacity="0.3"/><circle cx="510.8" cy="318.1" r="0.8" fill="#7a5032" opacity="0.5"/><circle cx="510.2" cy="317.5" r="0.6" fill="#c08c60" opacity="0.3"/><circle cx="610.5" cy="210.9" r="1.1" fill="#7a5032" opacity="0.5"/><circle cx="609.9" cy="210.3" r="0.8" fill="#c08c60" opacity="0.3"/><circle cx="603.5" cy="360.9" r="1.4" fill="#7a5032" opacity="0.5"/><circle cx="602.9" cy="360.3" r="1.0" fill="#c08c60" opacity="0.3"/><circle cx="685.3" cy="390.3" r="1.1" fill="#7a5032" opacity="0.5"/><circle cx="684.7" cy="389.7" r="0.7" fill="#c08c60" opacity="0.3"/><circle cx="898.4" cy="317.0" r="1.5" fill="#7a5032" opacity="0.5"/><circle cx="897.8" cy="316.4" r="1.1" fill="#c08c60" opacity="0.3"/><circle cx="673.3" cy="305.4" r="2.2" fill="#7a5032" opacity="0.5"/><circle cx="672.7" cy="304.8" r="1.5" fill="#c08c60" opacity="0.3"/><circle cx="580.7" cy="265.6" r="2.3" fill="#7a5032" opacity="0.5"/><circle cx="580.1" cy="265.0" r="1.6" fill="#c08c60" opacity="0.3"/><circle cx="529.2" cy="338.7" r="2.4" fill="#7a5032" opacity="0.5"/><circle cx="528.6" cy="338.1" r="1.7" fill="#c08c60" opacity="0.3"/><circle cx="607.6" cy="326.8" r="2.4" fill="#7a5032" opacity="0.5"/><circle cx="607.0" cy="326.2" r="1.7" fill="#c08c60" opacity="0.3"/><circle cx="469.9" cy="388.1" r="2.4" fill="#7a5032" opacity="0.5"/><circle cx="469.3" cy="387.5" r="1.7" fill="#c08c60" opacity="0.3"/><circle cx="745.9" cy="317.4" r="1.3" fill="#7a5032" opacity="0.5"/><circle cx="745.3" cy="316.8" r="0.9" fill="#c08c60" opacity="0.3"/><circle cx="619.6" cy="216.1" r="1.5" fill="#7a5032" opacity="0.5"/><circle cx="619.0" cy="215.5" r="1.1" fill="#c08c60" opacity="0.3"/><circle cx="289.6" cy="304.7" r="1.2" fill="#7a5032" opacity="0.5"/><circle cx="289.0" cy="304.1" r="0.9" fill="#c08c60" opacity="0.3"/><circle cx="563.1" cy="184.3" r="2.5" fill="#7a5032" opacity="0.5"/><circle cx="562.5" cy="183.7" r="1.8" fill="#c08c60" opacity="0.3"/><circle cx="701.4" cy="282.3" r="2.2" fill="#7a5032" opacity="0.5"/><circle cx="700.8" cy="281.7" r="1.6" fill="#c08c60" opacity="0.3"/></g><g filter="url(#b1)"><rect x="254.7" y="80.2" width="671.0" height="13" fill="#ddd0c0"/><path d="M254.7,94 L385.1722222222222,94 L478.3666666666667,91 L571.5611111111111,87 L590.2,90 L776.588888888889,91 L925.7,90 L925.7,104 L795.2277777777779,104 L702.0333333333333,110 L590.2,110 L478.3666666666667,114 L403.81111111111113,111 L254.7,103 Z" fill="#6a4a32"/><path d="M254.7,102.5 L310.6166666666667,103 L366.5333333333333,104.5 L394.4916666666667,107 L381.44444444444446,110.5 L329.25555555555553,109.5 L254.7,110 Z" fill="#f3ede2"/><path d="M254.7,80.2 L571.5611111111111,80.2 L515.6444444444444,86 L403.81111111111113,91 L310.6166666666667,93.5 L254.7,94 Z" fill="#ece4d8"/><path d="M273.3388888888889,84 L385.1722222222222,85.5" stroke="#8a6a50" stroke-width="1.3"/><path d="M347.89444444444445,88 L459.72777777777776,88.5" stroke="#9a7a60" stroke-width="1"/><ellipse cx="446.68055555555554" cy="98.5" rx="11" ry="2.6" fill="#f8f4ec"/><ellipse cx="385.1722222222222" cy="96" rx="14" ry="1.5" fill="#e8dccc"/><path d="M497.00555555555553,94 L552.9222222222222,92 L627.4777777777778,90 L702.0333333333333,89.5 L776.588888888889,90 L785.9083333333333,96 L757.95,101 L664.7555555555555,104 L590.2,104.5 L534.2833333333333,103 L506.325,100 Z" fill="#fbf8f2"/><path d="M590.2,84 L739.3111111111111,85" stroke="#8a7060" stroke-width="1.2"/><ellipse cx="709.4888888888888" cy="104.3" rx="8" ry="1.6" fill="#f4eee6"/><path d="M791.5,102 L851.1444444444444,102 L925.7,103 L925.7,111 L869.7833333333333,112 L810.1388888888889,111 L798.9555555555555,106 Z" fill="#f6f1ea"/><path d="M813.8666666666666,106.5 L916.3805555555555,107" stroke="#8a6a50" stroke-width="1.1"/><ellipse cx="767.2694444444444" cy="109" rx="8" ry="1.6" fill="#f0e8dc"/><ellipse cx="899" cy="114.4" rx="4.5" ry="2" fill="#f4eee6"/></g><g filter="url(#b6)"><path d="M420,104 L600,104 L592,150 L582,236 L548,250 L505,165 L470,140 L420,130 Z" fill="#7e5a3c" opacity="0.75"/></g><g filter="url(#b6)"><path d="M403.81111111111113,106 L702.0333333333333,106 L664.7555555555555,118 L552.9222222222222,120 L441.08888888888885,116 Z" fill="#7a5638" opacity="0.8"/></g><g filter="url(#b6)"><rect x="254.7" y="367.97777777777776" width="671.0" height="33.05555555555554" fill="#8a6040" opacity="0.55"/></g><g filter="url(#b3)"><path d="M254.7,430.2 L254.7,419 L310.6166666666667,418 L357.21388888888885,417 L385.1722222222222,415 L403.81111111111113,413 L441.08888888888885,406 L515.6444444444444,404 L552.9222222222222,401 L590.2,399.5 L925.7,399 L925.7,430.2 Z" fill="#f2eee8"/><path d="M254.7,421 L366.5333333333333,420" stroke="#7a6a5a" stroke-width="1.6"/></g><g filter="url(#b1)"><path d="M413.13055555555553,409 L459.72777777777776,404 L515.6444444444444,405 L478.3666666666667,410 Z" fill="#7a6a5a" opacity="0.7"/><path d="M431.76944444444445,411 L487.68611111111113,412" stroke="#6a5a4a" stroke-width="1.2"/><path d="M534.2833333333333,408 L562.2416666666667,409" stroke="#8a7a6a" stroke-width="1"/></g><rect x="254.7" y="80.2" width="671.0" height="350.0" filter="url(#noise)" opacity="0.2"/><path d="M254.70,80.2V430.2M264.02,80.2V430.2M273.34,80.2V430.2M282.66,80.2V430.2M291.98,80.2V430.2M301.30,80.2V430.2M310.62,80.2V430.2M319.94,80.2V430.2M329.26,80.2V430.2M338.57,80.2V430.2M347.89,80.2V430.2M357.21,80.2V430.2M366.53,80.2V430.2M375.85,80.2V430.2M385.17,80.2V430.2M394.49,80.2V430.2M403.81,80.2V430.2M413.13,80.2V430.2M422.45,80.2V430.2M431.77,80.2V430.2M441.09,80.2V430.2M450.41,80.2V430.2M459.73,80.2V430.2M469.05,80.2V430.2M478.37,80.2V430.2M487.69,80.2V430.2M497.01,80.2V430.2M506.32,80.2V430.2M515.64,80.2V430.2M524.96,80.2V430.2M534.28,80.2V430.2M543.60,80.2V430.2M552.92,80.2V430.2M562.24,80.2V430.2M571.56,80.2V430.2M580.88,80.2V430.2M590.20,80.2V430.2M599.52,80.2V430.2M608.84,80.2V430.2M618.16,80.2V430.2M627.48,80.2V430.2M636.80,80.2V430.2M646.12,80.2V430.2M655.44,80.2V430.2M664.76,80.2V430.2M674.08,80.2V430.2M683.39,80.2V430.2M692.71,80.2V430.2M702.03,80.2V430.2M711.35,80.2V430.2M720.67,80.2V430.2M729.99,80.2V430.2M739.31,80.2V430.2M748.63,80.2V430.2M757.95,80.2V430.2M767.27,80.2V430.2M776.59,80.2V430.2M785.91,80.2V430.2M795.23,80.2V430.2M804.55,80.2V430.2M813.87,80.2V430.2M823.19,80.2V430.2M832.51,80.2V430.2M841.83,80.2V430.2M851.14,80.2V430.2M860.46,80.2V430.2M869.78,80.2V430.2M879.10,80.2V430.2M888.42,80.2V430.2M897.74,80.2V430.2M907.06,80.2V430.2M916.38,80.2V430.2M925.70,80.2V430.2M254.7,80.20H925.7M254.7,89.92H925.7M254.7,99.64H925.7M254.7,109.37H925.7M254.7,119.09H925.7M254.7,128.81H925.7M254.7,138.53H925.7M254.7,148.26H925.7M254.7,157.98H925.7M254.7,167.70H925.7M254.7,177.42H925.7M254.7,187.14H925.7M254.7,196.87H925.7M254.7,206.59H925.7M254.7,216.31H925.7M254.7,226.03H925.7M254.7,235.76H925.7M254.7,245.48H925.7M254.7,255.20H925.7M254.7,264.92H925.7M254.7,274.64H925.7M254.7,284.37H925.7M254.7,294.09H925.7M254.7,303.81H925.7M254.7,313.53H925.7M254.7,323.26H925.7M254.7,332.98H925.7M254.7,342.70H925.7M254.7,352.42H925.7M254.7,362.14H925.7M254.7,371.87H925.7M254.7,381.59H925.7M254.7,391.31H925.7M254.7,401.03H925.7M254.7,410.76H925.7M254.7,420.48H925.7M254.7,430.20H925.7" stroke="#140800" stroke-opacity="0.34" stroke-width="0.9" fill="none"/><g font-family="Liberation Sans" font-size="8.6" fill="#1e1a30"><text x="254.7" y="90.4" text-anchor="middle">-180</text><text x="254.7" y="424.4" text-anchor="middle">-180</text><text x="292.0" y="90.4" text-anchor="middle">-160</text><text x="292.0" y="424.4" text-anchor="middle">-160</text><text x="329.3" y="90.4" text-anchor="middle">-140</text><text x="329.3" y="424.4" text-anchor="middle">-140</text><text x="366.5" y="90.4" text-anchor="middle">-120</text><text x="366.5" y="424.4" text-anchor="middle">-120</text><text x="403.8" y="90.4" text-anchor="middle">-100</text><text x="403.8" y="424.4" text-anchor="middle">-100</text><text x="441.1" y="90.4" text-anchor="middle">-80</text><text x="441.1" y="424.4" text-anchor="middle">-80</text><text x="478.4" y="90.4" text-anchor="middle">-60</text><text x="478.4" y="424.4" text-anchor="middle">-60</text><text x="515.6" y="90.4" text-anchor="middle">-40</text><text x="515.6" y="424.4" text-anchor="middle">-40</text><text x="552.9" y="90.4" text-anchor="middle">-20</text><text x="552.9" y="424.4" text-anchor="middle">-20</text><text x="590.2" y="90.4" text-anchor="middle">+0</text><text x="590.2" y="424.4" text-anchor="middle">+0</text><text x="627.5" y="90.4" text-anchor="middle">+20</text><text x="627.5" y="424.4" text-anchor="middle">+20</text><text x="664.8" y="90.4" text-anchor="middle">+40</text><text x="664.8" y="424.4" text-anchor="middle">+40</text><text x="702.0" y="90.4" text-anchor="middle">+60</text><text x="702.0" y="424.4" text-anchor="middle">+60</text><text x="739.3" y="90.4" text-anchor="middle">+80</text><text x="739.3" y="424.4" text-anchor="middle">+80</text><text x="776.6" y="90.4" text-anchor="middle">+100</text><text x="776.6" y="424.4" text-anchor="middle">+100</text><text x="813.9" y="90.4" text-anchor="middle">+120</text><text x="813.9" y="424.4" text-anchor="middle">+120</text><text x="851.1" y="90.4" text-anchor="middle">+140</text><text x="851.1" y="424.4" text-anchor="middle">+140</text><text x="888.4" y="90.4" text-anchor="middle">+160</text><text x="888.4" y="424.4" text-anchor="middle">+160</text><text x="925.7" y="90.4" text-anchor="middle">+180</text><text x="925.7" y="424.4" text-anchor="middle">+180</text><text x="258.2" y="84.1">+90</text><text x="908.2" y="84.1">+90</text><text x="258.2" y="103.5">+80</text><text x="908.2" y="103.5">+80</text><text x="258.2" y="123.0">+70</text><text x="908.2" y="123.0">+70</text><text x="258.2" y="142.4">+60</text><text x="908.2" y="142.4">+60</text><text x="258.2" y="161.9">+50</text><text x="908.2" y="161.9">+50</text><text x="258.2" y="181.3">+40</text><text x="908.2" y="181.3">+40</text><text x="258.2" y="200.8">+30</text><text x="908.2" y="200.8">+30</text><text x="258.2" y="220.2">+20</text><text x="908.2" y="220.2">+20</text><text x="258.2" y="239.7">+10</text><text x="258.2" y="259.1">+0</text><text x="258.2" y="278.5">-10</text><text x="258.2" y="298.0">-20</text><text x="258.2" y="317.4">-30</text><text x="258.2" y="336.9">-40</text><text x="258.2" y="356.3">-50</text><text x="258.2" y="375.8">-60</text><text x="258.2" y="395.2">-70</text><text x="258.2" y="414.7">-80</text><text x="258.2" y="434.1">-90</text></g><g font-family="Liberation Sans"><path d="M355.4,151.3 L362.9,151.3 L358.9,151.3 Z" fill="#fffff4" stroke="#222" stroke-width="0.7"/><rect x="357.4" y="151.3" width="40.5" height="10" fill="#fffff2" stroke="#2a2418" stroke-width="0.9"/><path d="M356.0,152.10000000000002 L362.09999999999997,152.0 L359.5,152.0 Z" fill="#fffff2"/><text x="377.65" y="159.0" text-anchor="middle" font-size="8.6" fill="#1a1a2a" textLength="37.5" lengthAdjust="spacingAndGlyphs">MPS-M13</text><path d="M350.2,145.70000000000002 L357.79999999999995,145.70000000000002 L354.0,152.10000000000002 Z" fill="#c8001a" stroke="#6a0010" stroke-width="0.9"/><path d="M352.59999999999997,147.0 L355.4,147.0 L354.0,149.10000000000002 Z" fill="#fff"/><path d="M262.2,214 L269.7,214.0 L265.7,214.0 Z" fill="#fffff4" stroke="#222" stroke-width="0.7"/><rect x="264.2" y="214.0" width="40.5" height="10" fill="#fffff2" stroke="#2a2418" stroke-width="0.9"/><path d="M262.8,214.8 L268.9,214.7 L266.3,214.7 Z" fill="#fffff2"/><text x="284.45" y="221.7" text-anchor="middle" font-size="8.6" fill="#1a1a2a" textLength="37.5" lengthAdjust="spacingAndGlyphs">MPS-M06</text><path d="M257.0,208.4 L264.59999999999997,208.4 L260.8,214.8 Z" fill="#c8001a" stroke="#6a0010" stroke-width="0.9"/><path d="M259.4,209.7 L262.2,209.7 L260.8,211.8 Z" fill="#fff"/><path d="M312.25,232.3 L319.75,232.3 L315.75,232.3 Z" fill="#fffff4" stroke="#222" stroke-width="0.7"/><rect x="314.25" y="232.3" width="40.5" height="10" fill="#fffff2" stroke="#2a2418" stroke-width="0.9"/><path d="M312.85,233.10000000000002 L318.95,233.0 L316.35,233.0 Z" fill="#fffff2"/><text x="334.5" y="240.0" text-anchor="middle" font-size="8.6" fill="#1a1a2a" textLength="37.5" lengthAdjust="spacingAndGlyphs">MPS-M20</text><path d="M307.05,226.70000000000002 L314.65,226.70000000000002 L310.85,233.10000000000002 Z" fill="#c8001a" stroke="#6a0010" stroke-width="0.9"/><path d="M309.45,228.0 L312.25,228.0 L310.85,230.10000000000002 Z" fill="#fff"/><path d="M391.4,237.4 L398.9,237.4 L394.9,237.4 Z" fill="#fffff4" stroke="#222" stroke-width="0.7"/><rect x="393.4" y="237.4" width="40.5" height="10" fill="#fffff2" stroke="#2a2418" stroke-width="0.9"/><path d="M392.0,238.20000000000002 L398.09999999999997,238.1 L395.5,238.1 Z" fill="#fffff2"/><text x="413.65" y="245.1" text-anchor="middle" font-size="8.6" fill="#1a1a2a" textLength="37.5" lengthAdjust="spacingAndGlyphs">MPS-M10</text><path d="M386.2,231.8 L393.79999999999995,231.8 L390.0,238.20000000000002 Z" fill="#c8001a" stroke="#6a0010" stroke-width="0.9"/><path d="M388.59999999999997,233.1 L391.4,233.1 L390.0,235.20000000000002 Z" fill="#fff"/><path d="M442.3,209.6 L449.8,209.6 L445.8,209.6 Z" fill="#fffff4" stroke="#222" stroke-width="0.7"/><rect x="444.3" y="209.6" width="40.5" height="10" fill="#fffff2" stroke="#2a2418" stroke-width="0.9"/><path d="M442.90000000000003,210.4 L449.0,210.29999999999998 L446.40000000000003,210.29999999999998 Z" fill="#fffff2"/><text x="464.55" y="217.29999999999998" text-anchor="middle" font-size="8.6" fill="#1a1a2a" textLength="37.5" lengthAdjust="spacingAndGlyphs">MPS-M24</text><path d="M437.1,204.0 L444.7,204.0 L440.90000000000003,210.4 Z" fill="#c8001a" stroke="#6a0010" stroke-width="0.9"/><path d="M439.5,205.29999999999998 L442.3,205.29999999999998 L440.90000000000003,207.4 Z" fill="#fff"/><path d="M513.0,158.6 L520.5,158.6 L516.5,158.6 Z" fill="#fffff4" stroke="#222" stroke-width="0.7"/><rect x="515.0" y="158.6" width="40.5" height="10" fill="#fffff2" stroke="#2a2418" stroke-width="0.9"/><path d="M513.6,159.4 L519.7,159.29999999999998 L517.1,159.29999999999998 Z" fill="#fffff2"/><text x="535.25" y="166.29999999999998" text-anchor="middle" font-size="8.6" fill="#1a1a2a" textLength="37.5" lengthAdjust="spacingAndGlyphs">MPS-M17</text><path d="M507.8,153.0 L515.4,153.0 L511.6,159.4 Z" fill="#c8001a" stroke="#6a0010" stroke-width="0.9"/><path d="M510.2,154.29999999999998 L513.0,154.29999999999998 L511.6,156.4 Z" fill="#fff"/><path d="M576.3,187.8 L583.8,187.8 L579.8,187.8 Z" fill="#fffff4" stroke="#222" stroke-width="0.7"/><rect x="578.3" y="187.8" width="40.5" height="10" fill="#fffff2" stroke="#2a2418" stroke-width="0.9"/><path d="M576.9,188.60000000000002 L583.0,188.5 L580.4,188.5 Z" fill="#fffff2"/><text x="598.55" y="195.5" text-anchor="middle" font-size="8.6" fill="#1a1a2a" textLength="37.5" lengthAdjust="spacingAndGlyphs">MPS-M01</text><path d="M571.0999999999999,182.20000000000002 L578.6999999999999,182.20000000000002 L574.9,188.60000000000002 Z" fill="#c8001a" stroke="#6a0010" stroke-width="0.9"/><path d="M573.5,183.5 L576.3,183.5 L574.9,185.60000000000002 Z" fill="#fff"/><path d="M519.5,262 L527,262.0 L523,262.0 Z" fill="#fffff4" stroke="#222" stroke-width="0.7"/><rect x="521.5" y="262.0" width="40.5" height="10" fill="#fffff2" stroke="#2a2418" stroke-width="0.9"/><path d="M520.1,262.8 L526.2,262.7 L523.6,262.7 Z" fill="#fffff2"/><text x="541.75" y="269.7" text-anchor="middle" font-size="8.6" fill="#1a1a2a" textLength="37.5" lengthAdjust="spacingAndGlyphs">MPS-M14</text><path d="M514.3,256.4 L521.9,256.4 L518.1,262.8 Z" fill="#c8001a" stroke="#6a0010" stroke-width="0.9"/><path d="M516.7,257.7 L519.5,257.7 L518.1,259.8 Z" fill="#fff"/><path d="M464.7,326 L472.2,326.0 L468.2,326.0 Z" fill="#fffff4" stroke="#222" stroke-width="0.7"/><rect x="466.7" y="326.0" width="40.5" height="10" fill="#fffff2" stroke="#2a2418" stroke-width="0.9"/><path d="M465.3,326.8 L471.4,326.7 L468.8,326.7 Z" fill="#fffff2"/><text x="486.95" y="333.7" text-anchor="middle" font-size="8.6" fill="#1a1a2a" textLength="37.5" lengthAdjust="spacingAndGlyphs">MPS-M04</text><path d="M459.5,320.4 L467.09999999999997,320.4 L463.3,326.8 Z" fill="#c8001a" stroke="#6a0010" stroke-width="0.9"/><path d="M461.9,321.7 L464.7,321.7 L463.3,323.8 Z" fill="#fff"/><path d="M325.5,344.8 L333,344.8 L329,344.8 Z" fill="#fffff4" stroke="#222" stroke-width="0.7"/><rect x="327.5" y="344.8" width="40.5" height="10" fill="#fffff2" stroke="#2a2418" stroke-width="0.9"/><path d="M326.1,345.6 L332.2,345.5 L329.6,345.5 Z" fill="#fffff2"/><text x="347.75" y="352.5" text-anchor="middle" font-size="8.6" fill="#1a1a2a" textLength="37.5" lengthAdjust="spacingAndGlyphs">MPS-M23</text><path d="M320.3,339.2 L327.9,339.2 L324.1,345.6 Z" fill="#c8001a" stroke="#6a0010" stroke-width="0.9"/><path d="M322.7,340.5 L325.5,340.5 L324.1,342.6 Z" fill="#fff"/><path d="M380.7,349.2 L388.2,349.2 L384.2,349.2 Z" fill="#fffff4" stroke="#222" stroke-width="0.7"/><rect x="382.7" y="349.2" width="40.5" height="10" fill="#fffff2" stroke="#2a2418" stroke-width="0.9"/><path d="M381.3,350.0 L387.4,349.9 L384.8,349.9 Z" fill="#fffff2"/><text x="402.95" y="356.9" text-anchor="middle" font-size="8.6" fill="#1a1a2a" textLength="37.5" lengthAdjust="spacingAndGlyphs">MPS-M07</text><path d="M375.5,343.59999999999997 L383.09999999999997,343.59999999999997 L379.3,350.0 Z" fill="#c8001a" stroke="#6a0010" stroke-width="0.9"/><path d="M377.9,344.9 L380.7,344.9 L379.3,347.0 Z" fill="#fff"/><path d="M531.9,361.4 L539.4,361.4 L535.4,361.4 Z" fill="#fffff4" stroke="#222" stroke-width="0.7"/><rect x="533.9" y="361.4" width="40.5" height="10" fill="#fffff2" stroke="#2a2418" stroke-width="0.9"/><path d="M532.5,362.2 L538.6,362.09999999999997 L536.0,362.09999999999997 Z" fill="#fffff2"/><text x="554.15" y="369.09999999999997" text-anchor="middle" font-size="8.6" fill="#1a1a2a" textLength="37.5" lengthAdjust="spacingAndGlyphs">MPS-M11</text><path d="M526.6999999999999,355.79999999999995 L534.3,355.79999999999995 L530.5,362.2 Z" fill="#c8001a" stroke="#6a0010" stroke-width="0.9"/><path d="M529.1,357.09999999999997 L531.9,357.09999999999997 L530.5,359.2 Z" fill="#fff"/><path d="M660.6,172.4 L668.1,172.4 L664.1,172.4 Z" fill="#fffff4" stroke="#222" stroke-width="0.7"/><rect x="662.6" y="172.4" width="40.5" height="10" fill="#fffff2" stroke="#2a2418" stroke-width="0.9"/><path d="M661.2,173.20000000000002 L667.3000000000001,173.1 L664.7,173.1 Z" fill="#fffff2"/><text x="682.85" y="180.1" text-anchor="middle" font-size="8.6" fill="#1a1a2a" textLength="37.5" lengthAdjust="spacingAndGlyphs">MPS-M21</text><path d="M655.4,166.8 L663.0,166.8 L659.2,173.20000000000002 Z" fill="#c8001a" stroke="#6a0010" stroke-width="0.9"/><path d="M657.8000000000001,168.1 L660.6,168.1 L659.2,170.20000000000002 Z" fill="#fff"/><path d="M715.9,168.1 L723.4,168.1 L719.4,168.1 Z" fill="#fffff4" stroke="#222" stroke-width="0.7"/><rect x="717.9" y="168.1" width="40.5" height="10" fill="#fffff2" stroke="#2a2418" stroke-width="0.9"/><path d="M716.5,168.9 L722.6,168.79999999999998 L720.0,168.79999999999998 Z" fill="#fffff2"/><text x="738.15" y="175.79999999999998" text-anchor="middle" font-size="8.6" fill="#1a1a2a" textLength="37.5" lengthAdjust="spacingAndGlyphs">MPS-M05</text><path d="M710.6999999999999,162.5 L718.3,162.5 L714.5,168.9 Z" fill="#c8001a" stroke="#6a0010" stroke-width="0.9"/><path d="M713.1,163.79999999999998 L715.9,163.79999999999998 L714.5,165.9 Z" fill="#fff"/><path d="M866.1,156 L873.6,156.0 L869.6,156.0 Z" fill="#fffff4" stroke="#222" stroke-width="0.7"/><rect x="868.1" y="156.0" width="40.5" height="10" fill="#fffff2" stroke="#2a2418" stroke-width="0.9"/><path d="M866.7,156.8 L872.8000000000001,156.7 L870.2,156.7 Z" fill="#fffff2"/><text x="888.35" y="163.7" text-anchor="middle" font-size="8.6" fill="#1a1a2a" textLength="37.5" lengthAdjust="spacingAndGlyphs">MPS-M09</text><path d="M860.9,150.4 L868.5,150.4 L864.7,156.8 Z" fill="#c8001a" stroke="#6a0010" stroke-width="0.9"/><path d="M863.3000000000001,151.7 L866.1,151.7 L864.7,153.8 Z" fill="#fff"/><path d="M799.5,192 L807,192.0 L803,192.0 Z" fill="#fffff4" stroke="#222" stroke-width="0.7"/><rect x="801.5" y="192.0" width="40.5" height="10" fill="#fffff2" stroke="#2a2418" stroke-width="0.9"/><path d="M800.1,192.8 L806.2,192.7 L803.6,192.7 Z" fill="#fffff2"/><text x="821.75" y="199.7" text-anchor="middle" font-size="8.6" fill="#1a1a2a" textLength="37.5" lengthAdjust="spacingAndGlyphs">MPS-M02</text><path d="M794.3,186.4 L801.9,186.4 L798.1,192.8 Z" fill="#c8001a" stroke="#6a0010" stroke-width="0.9"/><path d="M796.7,187.7 L799.5,187.7 L798.1,189.8 Z" fill="#fff"/><path d="M611.5,162.2 L618.6,163.8 L614.6,163.8 Z" fill="#fffff4" stroke="#222" stroke-width="0.7"/><rect x="613.1" y="163.8" width="40.5" height="10" fill="#fffff2" stroke="#2a2418" stroke-width="0.9"/><path d="M612.1,163.0 L617.8000000000001,164.5 L615.2,164.5 Z" fill="#fffff2"/><text x="633.35" y="171.5" text-anchor="middle" font-size="8.6" fill="#1a1a2a" textLength="37.5" lengthAdjust="spacingAndGlyphs">SFM-A01</text><path d="M606.5,162.7 L613.5,162.7 L610,156.5 Z" fill="#20b020" stroke="#0a600a" stroke-width="0.8"/><path d="M608.8,161.2 L611.2,161.2 L610,159.2 Z" fill="#fff"/></g></svg><div class="t" style="left:1.4px;top:60.3px;font-size:8.4px;letter-spacing:-0.5px;color:#222">Tree Views</div>
<svg class="a" style="left:215px;top:57px" width="30" height="12" viewBox="215 57 30 12"><rect x="219.3" y="61.3" width="4.6" height="3.6" fill="none" stroke="#444" stroke-width="0.9"/><path d="M220.8,61 L220.8,59.6 L225.3,59.6 L225.3,63.4 L224.2,63.4" fill="none" stroke="#444" stroke-width="0.9"/><path d="M232.6,60 L237.6,65 M237.6,60 L232.6,65" stroke="#222" stroke-width="1"/></svg>
<div class="a" style="left:1.5px;top:71px;width:241.5px;height:443px;background:#fff;border-left:1px solid #828282;border-top:1px solid #828282;border-right:1px solid #a0a0a0;border-bottom:1px solid #a0a0a0"></div>
<div class="a" style="left:2.5px;top:72px;width:79.8px;height:15.3px;background:#f0f0f0;border-top:1px solid #fff;border-left:1px solid #fff;border-right:1.5px solid #8a8a8a;border-bottom:1.5px solid #8a8a8a"></div>
<div class="t" style="left:5.5px;top:76.2px;font-size:8.4px;color:#2a2a3a">Type</div>
<div class="a" style="left:82.3px;top:72px;width:28.200000000000003px;height:15.3px;background:#f0f0f0;border-top:1px solid #fff;border-left:1px solid #fff;border-right:1.5px solid #8a8a8a;border-bottom:1.5px solid #8a8a8a"></div>
<div class="t" style="left:85.3px;top:76.2px;font-size:8.4px;color:#2a2a3a">Idx</div>
<div class="a" style="left:110.5px;top:72px;width:53.400000000000006px;height:15.3px;background:#f0f0f0;border-top:1px solid #fff;border-left:1px solid #fff;border-right:1.5px solid #8a8a8a;border-bottom:1.5px solid #8a8a8a"></div>
<div class="t" style="left:113.5px;top:76.2px;font-size:8.4px;color:#2a2a3a">Name</div>
<div class="a" style="left:163.9px;top:72px;width:76.1px;height:15.3px;background:#f0f0f0;border-top:1px solid #fff;border-left:1px solid #fff;border-right:1.5px solid #8a8a8a;border-bottom:1.5px solid #8a8a8a"></div>
<div class="t" style="left:166.9px;top:76.2px;font-size:8.4px;color:#2a2a3a">Chr/LogPosVel</div>
<div class="t" style="left:18.2px;top:89.2px;font-size:8.6px">Segment</div>
<div class="t" style="left:84.8px;top:89.2px;font-size:8.6px">1</div>
<div class="t" style="left:31.6px;top:99.2px;font-size:8.6px">System</div>
<div class="t" style="left:84.8px;top:99.2px;font-size:8.6px">1</div>
<div class="t" style="left:113.5px;top:99.2px;font-size:8.6px">MPS</div>
<div class="t" style="left:167px;top:99.2px;font-size:8.6px">M</div>
<div class="t" style="left:45px;top:109.2px;font-size:8.6px">Object</div>
<div class="t" style="left:84.8px;top:109.2px;font-size:8.6px">1</div>
<div class="t" style="left:113.5px;top:109.2px;font-size:8.6px">M01</div>
<div class="t" style="left:167px;top:109.2px;font-size:8.6px">no</div>
<div class="t" style="left:45px;top:119.2px;font-size:8.6px">Object</div>
<div class="t" style="left:84.8px;top:119.2px;font-size:8.6px">2</div>
<div class="t" style="left:113.5px;top:119.2px;font-size:8.6px">M02</div>
<div class="t" style="left:167px;top:119.2px;font-size:8.6px">no</div>
<div class="t" style="left:45px;top:129.2px;font-size:8.6px">Object</div>
<div class="t" style="left:84.8px;top:129.2px;font-size:8.6px">3</div>
<div class="t" style="left:113.5px;top:129.2px;font-size:8.6px">M03</div>
<div class="t" style="left:167px;top:129.2px;font-size:8.6px">no</div>
<div class="t" style="left:45px;top:139.2px;font-size:8.6px">Object</div>
<div class="t" style="left:84.8px;top:139.2px;font-size:8.6px">4</div>
<div class="t" style="left:113.5px;top:139.2px;font-size:8.6px">M04</div>
<div class="t" style="left:167px;top:139.2px;font-size:8.6px">no</div>
<div class="t" style="left:45px;top:149.2px;font-size:8.6px">Object</div>
<div class="t" style="left:84.8px;top:149.2px;font-size:8.6px">5</div>
<div class="t" style="left:113.5px;top:149.2px;font-size:8.6px">M05</div>
<div class="t" style="left:167px;top:149.2px;font-size:8.6px">no</div>
<div class="t" style="left:45px;top:159.2px;font-size:8.6px">Object</div>
<div class="t" style="left:84.8px;top:159.2px;font-size:8.6px">6</div>
<div class="t" style="left:113.5px;top:159.2px;font-size:8.6px">M06</div>
<div class="t" style="left:167px;top:159.2px;font-size:8.6px">no</div>
<div class="t" style="left:45px;top:169.2px;font-size:8.6px">Object</div>
<div class="t" style="left:84.8px;top:169.2px;font-size:8.6px">7</div>
<div class="t" style="left:113.5px;top:169.2px;font-size:8.6px">M07</div>
<div class="t" style="left:167px;top:169.2px;font-size:8.6px">no</div>
<div class="t" style="left:45px;top:179.2px;font-size:8.6px">Object</div>
<div class="t" style="left:84.8px;top:179.2px;font-size:8.6px">8</div>
<div class="t" style="left:113.5px;top:179.2px;font-size:8.6px">M08</div>
<div class="t" style="left:167px;top:179.2px;font-size:8.6px">no</div>
<div class="t" style="left:45px;top:189.2px;font-size:8.6px">Object</div>
<div class="t" style="left:84.8px;top:189.2px;font-size:8.6px">9</div>
<div class="t" style="left:113.5px;top:189.2px;font-size:8.6px">M09</div>
<div class="t" style="left:167px;top:189.2px;font-size:8.6px">no</div>
<div class="t" style="left:45px;top:199.2px;font-size:8.6px">Object</div>
<div class="t" style="left:84.8px;top:199.2px;font-size:8.6px">10</div>
<div class="t" style="left:113.5px;top:199.2px;font-size:8.6px">M10</div>
<div class="t" style="left:167px;top:199.2px;font-size:8.6px">no</div>
<div class="t" style="left:45px;top:209.2px;font-size:8.6px">Object</div>
<div class="t" style="left:84.8px;top:209.2px;font-size:8.6px">11</div>
<div class="t" style="left:113.5px;top:209.2px;font-size:8.6px">M11</div>
<div class="t" style="left:167px;top:209.2px;font-size:8.6px">no</div>
<div class="t" style="left:45px;top:219.2px;font-size:8.6px">Object</div>
<div class="t" style="left:84.8px;top:219.2px;font-size:8.6px">12</div>
<div class="t" style="left:113.5px;top:219.2px;font-size:8.6px">M12</div>
<div class="t" style="left:167px;top:219.2px;font-size:8.6px">no</div>
<div class="t" style="left:45px;top:229.2px;font-size:8.6px">Object</div>
<div class="t" style="left:84.8px;top:229.2px;font-size:8.6px">13</div>
<div class="t" style="left:113.5px;top:229.2px;font-size:8.6px">M13</div>
<div class="t" style="left:167px;top:229.2px;font-size:8.6px">no</div>
<div class="t" style="left:45px;top:239.2px;font-size:8.6px">Object</div>
<div class="t" style="left:84.8px;top:239.2px;font-size:8.6px">14</div>
<div class="t" style="left:113.5px;top:239.2px;font-size:8.6px">M14</div>
<div class="t" style="left:167px;top:239.2px;font-size:8.6px">no</div>
<div class="t" style="left:45px;top:249.2px;font-size:8.6px">Object</div>
<div class="t" style="left:84.8px;top:249.2px;font-size:8.6px">15</div>
<div class="t" style="left:113.5px;top:249.2px;font-size:8.6px">M15</div>
<div class="t" style="left:167px;top:249.2px;font-size:8.6px">no</div>
<div class="t" style="left:45px;top:259.2px;font-size:8.6px">Object</div>
<div class="t" style="left:84.8px;top:259.2px;font-size:8.6px">16</div>
<div class="t" style="left:113.5px;top:259.2px;font-size:8.6px">M16</div>
<div class="t" style="left:167px;top:259.2px;font-size:8.6px">no</div>
<div class="t" style="left:45px;top:269.2px;font-size:8.6px">Object</div>
<div class="t" style="left:84.8px;top:269.2px;font-size:8.6px">17</div>
<div class="t" style="left:113.5px;top:269.2px;font-size:8.6px">M17</div>
<div class="t" style="left:167px;top:269.2px;font-size:8.6px">no</div>
<div class="t" style="left:45px;top:279.2px;font-size:8.6px">Object</div>
<div class="t" style="left:84.8px;top:279.2px;font-size:8.6px">18</div>
<div class="t" style="left:113.5px;top:279.2px;font-size:8.6px">M18</div>
<div class="t" style="left:167px;top:279.2px;font-size:8.6px">no</div>
<div class="t" style="left:45px;top:289.2px;font-size:8.6px">Object</div>
<div class="t" style="left:84.8px;top:289.2px;font-size:8.6px">19</div>
<div class="t" style="left:113.5px;top:289.2px;font-size:8.6px">M19</div>
<div class="t" style="left:167px;top:289.2px;font-size:8.6px">no</div>
<div class="t" style="left:45px;top:299.2px;font-size:8.6px">Object</div>
<div class="t" style="left:84.8px;top:299.2px;font-size:8.6px">20</div>
<div class="t" style="left:113.5px;top:299.2px;font-size:8.6px">M20</div>
<div class="t" style="left:167px;top:299.2px;font-size:8.6px">no</div>
<div class="t" style="left:45px;top:309.2px;font-size:8.6px">Object</div>
<div class="t" style="left:84.8px;top:309.2px;font-size:8.6px">21</div>
<div class="t" style="left:113.5px;top:309.2px;font-size:8.6px">M21</div>
<div class="t" style="left:167px;top:309.2px;font-size:8.6px">no</div>
<div class="t" style="left:45px;top:319.2px;font-size:8.6px">Object</div>
<div class="t" style="left:84.8px;top:319.2px;font-size:8.6px">22</div>
<div class="t" style="left:113.5px;top:319.2px;font-size:8.6px">M22</div>
<div class="t" style="left:167px;top:319.2px;font-size:8.6px">no</div>
<div class="t" style="left:45px;top:329.2px;font-size:8.6px">Object</div>
<div class="t" style="left:84.8px;top:329.2px;font-size:8.6px">23</div>
<div class="t" style="left:113.5px;top:329.2px;font-size:8.6px">M23</div>
<div class="t" style="left:167px;top:329.2px;font-size:8.6px">no</div>
<div class="t" style="left:45px;top:339.2px;font-size:8.6px">Object</div>
<div class="t" style="left:84.8px;top:339.2px;font-size:8.6px">24</div>
<div class="t" style="left:113.5px;top:339.2px;font-size:8.6px">M24</div>
<div class="t" style="left:167px;top:339.2px;font-size:8.6px">no</div>
<svg class="a" style="left:0;top:85px" width="50" height="270" viewBox="0 85 50 270"><rect x="6.5" y="90.8" width="5.6" height="5.6" fill="#fff" stroke="#a8a8a8" stroke-width="0.9"/><line x1="8" y1="93.6" x2="10.6" y2="93.6" stroke="#555" stroke-width="0.9"/><line x1="12.2" y1="93.6" x2="16.5" y2="93.6" stroke="#bbb" stroke-width="0.8" stroke-dasharray="1 1"/><line x1="9.3" y1="88.5" x2="9.3" y2="90.8" stroke="#bbb" stroke-width="0.8"/><rect x="20.3" y="100.8" width="5.6" height="5.6" fill="#fff" stroke="#a8a8a8" stroke-width="0.9"/><line x1="21.8" y1="103.6" x2="24.4" y2="103.6" stroke="#555" stroke-width="0.9"/><line x1="26" y1="103.6" x2="30" y2="103.6" stroke="#bbb" stroke-width="0.8" stroke-dasharray="1 1"/><line x1="23.1" y1="98.5" x2="23.1" y2="100.8" stroke="#bbb" stroke-width="0.8"/><line x1="37" y1="108.5" x2="37" y2="343.8" stroke="#c0c0c0" stroke-width="0.8" stroke-dasharray="1 1"/><line x1="37" y1="113.6" x2="43" y2="113.6" stroke="#c0c0c0" stroke-width="0.8" stroke-dasharray="1 1"/><line x1="37" y1="123.6" x2="43" y2="123.6" stroke="#c0c0c0" stroke-width="0.8" stroke-dasharray="1 1"/><line x1="37" y1="133.6" x2="43" y2="133.6" stroke="#c0c0c0" stroke-width="0.8" stroke-dasharray="1 1"/><line x1="37" y1="143.6" x2="43" y2="143.6" stroke="#c0c0c0" stroke-width="0.8" stroke-dasharray="1 1"/><line x1="37" y1="153.6" x2="43" y2="153.6" stroke="#c0c0c0" stroke-width="0.8" stroke-dasharray="1 1"/><line x1="37" y1="163.6" x2="43" y2="163.6" stroke="#c0c0c0" stroke-width="0.8" stroke-dasharray="1 1"/><line x1="37" y1="173.6" x2="43" y2="173.6" stroke="#c0c0c0" stroke-width="0.8" stroke-dasharray="1 1"/><line x1="37" y1="183.6" x2="43" y2="183.6" stroke="#c0c0c0" stroke-width="0.8" stroke-dasharray="1 1"/><line x1="37" y1="193.6" x2="43" y2="193.6" stroke="#c0c0c0" stroke-width="0.8" stroke-dasharray="1 1"/><line x1="37" y1="203.6" x2="43" y2="203.6" stroke="#c0c0c0" stroke-width="0.8" stroke-dasharray="1 1"/><line x1="37" y1="213.6" x2="43" y2="213.6" stroke="#c0c0c0" stroke-width="0.8" stroke-dasharray="1 1"/><line x1="37" y1="223.6" x2="43" y2="223.6" stroke="#c0c0c0" stroke-width="0.8" stroke-dasharray="1 1"/><line x1="37" y1="233.6" x2="43" y2="233.6" stroke="#c0c0c0" stroke-width="0.8" stroke-dasharray="1 1"/><line x1="37" y1="243.6" x2="43" y2="243.6" stroke="#c0c0c0" stroke-width="0.8" stroke-dasharray="1 1"/><line x1="37" y1="253.6" x2="43" y2="253.6" stroke="#c0c0c0" stroke-width="0.8" stroke-dasharray="1 1"/><line x1="37" y1="263.6" x2="43" y2="263.6" stroke="#c0c0c0" stroke-width="0.8" stroke-dasharray="1 1"/><line x1="37" y1="273.6" x2="43" y2="273.6" stroke="#c0c0c0" stroke-width="0.8" stroke-dasharray="1 1"/><line x1="37" y1="283.6" x2="43" y2="283.6" stroke="#c0c0c0" stroke-width="0.8" stroke-dasharray="1 1"/><line x1="37" y1="293.6" x2="43" y2="293.6" stroke="#c0c0c0" stroke-width="0.8" stroke-dasharray="1 1"/><line x1="37" y1="303.6" x2="43" y2="303.6" stroke="#c0c0c0" stroke-width="0.8" stroke-dasharray="1 1"/><line x1="37" y1="313.6" x2="43" y2="313.6" stroke="#c0c0c0" stroke-width="0.8" stroke-dasharray="1 1"/><line x1="37" y1="323.6" x2="43" y2="323.6" stroke="#c0c0c0" stroke-width="0.8" stroke-dasharray="1 1"/><line x1="37" y1="333.6" x2="43" y2="333.6" stroke="#c0c0c0" stroke-width="0.8" stroke-dasharray="1 1"/><line x1="37" y1="343.6" x2="43" y2="343.6" stroke="#c0c0c0" stroke-width="0.8" stroke-dasharray="1 1"/></svg>
<div class="a" style="left:1px;top:513px;width:29.5px;height:17px;background:#f2f2f2;border-bottom:1.5px solid #7a7a7a;border-right:1px solid #d0d0d0"></div>
<div class="t" style="left:7.8px;top:517.6px;font-size:8.6px;color:#222">Snd</div>
<div class="a" style="left:30.5px;top:515px;width:30px;height:13.5px;background:#f0f0f0;border:1px solid #8a8a8a;border-top:0;border-bottom-width:1.5px;border-right-width:1.5px"></div>
<div class="t" style="left:38.8px;top:517.6px;font-size:8.6px;color:#222">Rcv</div>
<div class="a" style="left:61.5px;top:515px;width:27px;height:13.5px;background:#f0f0f0;border:1px solid #8a8a8a;border-top:0;border-left:0;border-bottom-width:1.5px;border-right-width:1.5px"></div>
<div class="t" style="left:69.3px;top:517.6px;font-size:8.6px;color:#222">Sig</div>
<div class="a" style="left:30.5px;top:514.5px;width:58px;height:1px;background:#8a8a8a"></div><div class="t" style="left:1.6px;top:536.2px;font-size:8.4px;letter-spacing:-0.35px;color:#222">Logs</div>
<svg class="a" style="left:1250px;top:530px" width="30" height="15" viewBox="1250 530 30 15"><rect x="1256.8" y="537.5" width="4.2" height="3.6" fill="none" stroke="#444" stroke-width="0.9"/><path d="M1258.2,537.2 L1258.2,535.7 L1262.4,535.7 L1262.4,539.4 L1261.2,539.4" fill="none" stroke="#444" stroke-width="0.9"/><path d="M1270.2,536 L1275.2,541 M1275.2,536 L1270.2,541" stroke="#222" stroke-width="1"/></svg>
<div class="a" style="left:1.5px;top:547px;width:1277px;height:130px;background:#fff;border-left:1.5px solid #7a7a7a;border-top:1.5px solid #7a7a7a;border-right:1px solid #a0a0a0;border-bottom:1.5px solid #8a8a8a;overflow:hidden">
<div class="t mono" style="left:4.1px;top:-0.70px;font-size:7.8px;letter-spacing:0.64px;color:#2222c4;-webkit-text-stroke:0.12px #2222c4">[2024-03-22 12:36:02]:INF: Shifting eph-reftime for MPS-M14 to 2024-02-01_05:00:00</div>
<div class="t mono" style="left:4.1px;top:9.94px;font-size:7.8px;letter-spacing:0.64px;color:#2222c4;-webkit-text-stroke:0.12px #2222c4">[2024-03-22 12:36:02]:INF: Shifting eph-reftime for MPS-M15 to 2024-02-01_05:00:00</div>
<div class="t mono" style="left:4.1px;top:20.58px;font-size:7.8px;letter-spacing:0.64px;color:#2222c4;-webkit-text-stroke:0.12px #2222c4">[2024-03-22 12:36:02]:INF: Shifting eph-reftime for MPS-M16 to 2024-02-01_05:00:00</div>
<div class="t mono" style="left:4.1px;top:31.22px;font-size:7.8px;letter-spacing:0.64px;color:#2222c4;-webkit-text-stroke:0.12px #2222c4">[2024-03-22 12:36:02]:INF: Shifting eph-reftime for MPS-M17 to 2024-02-01_05:00:00</div>
<div class="t mono" style="left:4.1px;top:41.86px;font-size:7.8px;letter-spacing:0.64px;color:#2222c4;-webkit-text-stroke:0.12px #2222c4">[2024-03-22 12:36:02]:INF: Shifting eph-reftime for MPS-M18 to 2024-02-01_05:00:00</div>
<div class="t mono" style="left:4.1px;top:52.50px;font-size:7.8px;letter-spacing:0.64px;color:#2222c4;-webkit-text-stroke:0.12px #2222c4">[2024-03-22 12:36:02]:INF: Shifting eph-reftime for MPS-M19 to 2024-02-01_05:00:00</div>
<div class="t mono" style="left:4.1px;top:63.14px;font-size:7.8px;letter-spacing:0.64px;color:#2222c4;-webkit-text-stroke:0.12px #2222c4">[2024-03-22 12:36:02]:INF: Shifting eph-reftime for MPS-M20 to 2024-02-01_05:00:00</div>
<div class="t mono" style="left:4.1px;top:73.78px;font-size:7.8px;letter-spacing:0.64px;color:#2222c4;-webkit-text-stroke:0.12px #2222c4">[2024-03-22 12:36:02]:INF: Shifting eph-reftime for MPS-M21 to 2024-02-01_05:00:00</div>
<div class="t mono" style="left:4.1px;top:84.42px;font-size:7.8px;letter-spacing:0.64px;color:#2222c4;-webkit-text-stroke:0.12px #2222c4">[2024-03-22 12:36:02]:INF: Shifting eph-reftime for MPS-M22 to 2024-02-01_05:00:00</div>
<div class="t mono" style="left:4.1px;top:95.06px;font-size:7.8px;letter-spacing:0.64px;color:#2222c4;-webkit-text-stroke:0.12px #2222c4">[2024-03-22 12:36:02]:INF: Shifting eph-reftime for MPS-M23 to 2024-02-01_05:00:00</div>
<div class="t mono" style="left:4.1px;top:105.70px;font-size:7.8px;letter-spacing:0.64px;color:#2222c4;-webkit-text-stroke:0.12px #2222c4">[2024-03-22 12:36:02]:INF: Shifting eph-reftime for MPS-M24 to 2024-02-01_05:00:00</div>
<div class="t mono" style="left:4.1px;top:116.34px;font-size:7.8px;letter-spacing:0.64px;color:#2222c4;-webkit-text-stroke:0.12px #2222c4">[2024-03-22 12:36:02]:INF: Processor paused</div>
</div>
<div class="a" style="left:1265.5px;top:548.5px;width:11.5px;height:127px;background:#f3f3f3"></div>
<div class="a" style="left:1266px;top:548.6px;width:11px;height:11px;background:#f6f6f6;border-right:1px solid #8a8a8a;border-bottom:1px solid #8a8a8a"></div>
<div class="a" style="left:1266px;top:655px;width:11px;height:7.5px;background:#ececec;border-right:1px solid #8a8a8a;border-bottom:1px solid #8a8a8a"></div>
<div class="a" style="left:1266px;top:662.5px;width:11px;height:11px;background:#f6f6f6;border-right:1px solid #8a8a8a;border-bottom:1px solid #8a8a8a"></div>
<svg class="a" style="left:1265px;top:548px" width="13" height="128" viewBox="1265 548 13 128"><path d="M1268.8,555.6 L1273.2,555.6 L1271,553 Z" fill="#111"/><path d="M1267.8,666.2 L1272.2,666.2 L1270,668.8 Z" fill="#111"/></svg>
<svg class="a" style="left:0;top:675px" width="40" height="13" viewBox="0 675 40 13"><path d="M0,677 L1.5,677 L4,684.5 Q5,687.3 8,687.3 L22,687.3 Q25,687.3 26,684.5 L28.6,677.6 L40,677.6" fill="#f4f4f4" stroke="#333" stroke-width="1"/></svg>
<div class="t" style="left:8px;top:679.4px;font-size:8.6px;color:#222">Log</div><div class="a" style="left:246px;top:444px;width:245px;height:86px;background:#dcdcfc;border-left:2px solid #f8f8f8;border-top:2px solid #f8f8f8;border-right:2px solid #7a7a7a;border-bottom:2px solid #7a7a7a;box-shadow:inset -1.3px -1.3px 0 #fafafa"></div>
<div class="a" style="left:248px;top:446px;width:238.7px;height:14.5px;background:#a0a0a0"></div>
<svg class="a" style="left:250px;top:448px" width="11" height="11" viewBox="0 0 11 11"><rect x="0.6" y="0.6" width="9.8" height="9.8" rx="1" fill="#ccccff" stroke="#2a2a3a" stroke-width="1.1"/><line x1="1.8" y1="9.2" x2="9.2" y2="1.8" stroke="#222" stroke-width="2.2"/><line x1="1.8" y1="9.2" x2="9.2" y2="1.8" stroke="#f4f4f4" stroke-width="1.1"/><ellipse cx="5.5" cy="5.5" rx="2.3" ry="1.7" transform="rotate(-45 5.5 5.5)" fill="#f4f000" stroke="#333" stroke-width="0.5"/></svg>
<div class="t" style="left:262.6px;top:449.9px;font-size:8.6px;color:#e2e4ee">ProcessingControl</div>
<div class="a" style="left:446.7px;top:448px;width:11.6px;height:11.6px;background:#f2f2f2;border-top:1px solid #fff;border-left:1px solid #fff;border-right:1px solid #777;border-bottom:1.2px solid #666"></div>
<div class="a" style="left:460.3px;top:448px;width:11.6px;height:11.6px;background:#f2f2f2;border-top:1px solid #fff;border-left:1px solid #fff;border-right:1px solid #777;border-bottom:1.2px solid #666"></div>
<div class="a" style="left:473.59999999999997px;top:448px;width:11.6px;height:11.6px;background:#f2f2f2;border-top:1px solid #fff;border-left:1px solid #fff;border-right:1px solid #777;border-bottom:1.2px solid #666"></div>
<div class="a" style="left:450.3px;top:455.2px;width:4.4px;height:1.2px;background:#222"></div>
<div class="a" style="left:463.1px;top:450.6px;width:6.4px;height:6.2px;border:1px solid #222;border-top-width:2px"></div>
<svg class="a" style="left:473.59999999999997px;top:448px" width="12" height="12" viewBox="0 0 12 12"><path d="M3.2,3.3 L8.4,8.5 M8.4,3.3 L3.2,8.5" stroke="#222" stroke-width="1.3"/></svg><svg class="a" style="left:250px;top:462px" width="230" height="66" viewBox="250 462 230 66"><circle cx="281.5" cy="494.1" r="25.2" fill="#fff" stroke="#7a7a7a" stroke-width="2.4"/><circle cx="281.5" cy="494.1" r="23.599999999999998" fill="none" stroke="#bdbdbd" stroke-width="0.7"/><path d="M304.50,494.10L302.30,494.10M304.22,497.70L302.04,497.35M303.37,501.21L301.28,500.53M301.99,504.54L300.03,503.54M300.11,507.62L298.33,506.33M297.76,510.36L296.21,508.81M295.02,512.71L293.73,510.93M291.94,514.59L290.94,512.63M288.61,515.97L287.93,513.88M285.10,516.82L284.75,514.64M281.50,517.10L281.50,514.90M277.90,516.82L278.25,514.64M274.39,515.97L275.07,513.88M271.06,514.59L272.06,512.63M267.98,512.71L269.27,510.93M265.24,510.36L266.79,508.81M262.89,507.62L264.67,506.33M261.01,504.54L262.97,503.54M259.63,501.21L261.72,500.53M258.78,497.70L260.96,497.35M258.50,494.10L260.70,494.10M258.78,490.50L260.96,490.85M259.63,486.99L261.72,487.67M261.01,483.66L262.97,484.66M262.89,480.58L264.67,481.87M265.24,477.84L266.79,479.39M267.98,475.49L269.27,477.27M271.06,473.61L272.06,475.57M274.39,472.23L275.07,474.32M277.90,471.38L278.25,473.56M281.50,471.10L281.50,473.30M285.10,471.38L284.75,473.56M288.61,472.23L287.93,474.32M291.94,473.61L290.94,475.57M295.02,475.49L293.73,477.27M297.76,477.84L296.21,479.39M300.11,480.58L298.33,481.87M301.99,483.66L300.03,484.66M303.37,486.99L301.28,487.67M304.22,490.50L302.04,490.85" stroke="#333" stroke-width="0.8"/><path d="M281.5,494.1 L286.42,492.26 L293.4,472.7 Z" fill="#f6f4d0" stroke="#111" stroke-width="0.6"/><path d="M281.5,494.1 L280.47,488.95 L293.4,472.7 Z" fill="#9a9a9a" stroke="#111" stroke-width="0.6"/><path d="M281.5,494.1 L283.45,498.98 L302.1,505 Z" fill="#f6f4d0" stroke="#111" stroke-width="0.6"/><path d="M281.5,494.1 L286.63,492.97 L302.1,505 Z" fill="#9a9a9a" stroke="#111" stroke-width="0.6"/><path d="M281.5,494.1 L276.51,495.75 L269,514.6 Z" fill="#f6f4d0" stroke="#111" stroke-width="0.6"/><path d="M281.5,494.1 L282.32,499.29 L269,514.6 Z" fill="#9a9a9a" stroke="#111" stroke-width="0.6"/><path d="M281.5,494.1 L279.82,489.13 L260.3,481.4 Z" fill="#f6f4d0" stroke="#111" stroke-width="0.6"/><path d="M281.5,494.1 L276.32,494.96 L260.3,481.4 Z" fill="#9a9a9a" stroke="#111" stroke-width="0.6"/><circle cx="281.5" cy="494.1" r="1.1" fill="#111"/><rect x="319.09999999999997" y="471.1" width="19.200000000000024" height="19.6" rx="4" fill="#e2e2e2" stroke="#a8a8a8" stroke-width="1.4"/><path d="M323.2,474.6 L334,480.8 L323.2,487 Z" fill="none" stroke="#9a9a9a" stroke-width="0.9"/><rect x="344.7" y="471.1" width="19.85" height="19.6" rx="4" fill="#ccccff" stroke="#4e4e5e" stroke-width="1.4"/><path d="M347.5,475.2 L358.2,480.8 L347.5,486.4 Z" fill="#ffee00" stroke="#333" stroke-width="0.8"/><rect x="358.6" y="474.8" width="2.4" height="11.8" fill="#ffee00" stroke="#333" stroke-width="0.7"/><rect x="368.4" y="468.5" width="25" height="23.8" fill="#f0f0f0" stroke="#d8d8d8" stroke-width="0.6"/><rect x="370.9" y="471.1" width="20" height="20.2" rx="4" fill="#ccccff" stroke="#4e4e5e" stroke-width="1.4"/><rect x="376.8" y="475.3" width="2.6" height="11.4" fill="#ffee00" stroke="#333" stroke-width="0.7"/><rect x="382.6" y="475.3" width="2.6" height="11.4" fill="#ffee00" stroke="#333" stroke-width="0.7"/><rect x="396.59999999999997" y="471.1" width="20.450000000000024" height="19.6" rx="4" fill="#ccccff" stroke="#4e4e5e" stroke-width="1.4"/><rect x="400.8" y="475.6" width="11.2" height="10.8" fill="#ffee00" stroke="#333" stroke-width="0.8"/><rect x="422.8" y="471.1" width="19.899999999999956" height="19.6" rx="4" fill="#ccccff" stroke="#4e4e5e" stroke-width="1.4"/><rect x="425.2" y="474.8" width="2.2" height="11.8" fill="#ffee00" stroke="#333" stroke-width="0.7"/><path d="M434,475.2 L427.8,480.8 L434,486.4 Z" fill="#ffee00" stroke="#333" stroke-width="0.7"/><path d="M440.2,475.2 L434,480.8 L440.2,486.4 Z" fill="#ffee00" stroke="#333" stroke-width="0.7"/><rect x="448.7" y="471.1" width="20.200000000000024" height="19.6" rx="4" fill="#ccccff" stroke="#4e4e5e" stroke-width="1.4"/><rect x="451.8" y="474.4" width="14" height="13" fill="#ffee00" stroke="#222" stroke-width="1.1"/><path d="M452.8,475.4 L464.8,486.4 M464.8,475.4 L452.8,486.4" stroke="#333" stroke-width="0.7"/></svg><div class="t" style="left:314.9px;top:497.3px;font-size:8.6px;color:#222">Epoch:</div><div class="t" style="left:361.8px;top:497.3px;font-size:8.4px;color:#2c2cc8">2024-02-01_05:12:00.000</div><div class="t" style="left:314.9px;top:510.6px;font-size:8.6px;color:#222">Progress:</div><div class="a" style="left:361.3px;top:507.5px;width:120.6px;height:13.8px;background:#fff;border:1px solid #555;border-bottom-width:1.3px"></div><div class="a" style="left:362.3px;top:508.5px;width:25.1px;height:11.8px;background:#fdfcd6;border-right:1px solid #555"></div><div class="t" style="left:412.7px;top:510.6px;font-size:8.6px;color:#2c2cc8">21%</div><div class="a" style="left:593px;top:229px;width:342px;height:301px;background:#dcdcfc;border-left:2px solid #f8f8f8;border-top:2px solid #f8f8f8;border-right:2px solid #7a7a7a;border-bottom:2px solid #7a7a7a;box-shadow:inset -1.3px -1.3px 0 #fafafa"></div>
<div class="a" style="left:595px;top:231px;width:335.7px;height:14.5px;background:#0078d7"></div>
<svg class="a" style="left:597px;top:233px" width="11" height="11" viewBox="0 0 11 11"><rect x="0.6" y="0.6" width="9.8" height="9.8" rx="1" fill="#ccccff" stroke="#2a2a3a" stroke-width="1.1"/><line x1="1.8" y1="9.2" x2="9.2" y2="1.8" stroke="#222" stroke-width="2.2"/><line x1="1.8" y1="9.2" x2="9.2" y2="1.8" stroke="#f4f4f4" stroke-width="1.1"/><ellipse cx="5.5" cy="5.5" rx="2.3" ry="1.7" transform="rotate(-45 5.5 5.5)" fill="#f4f000" stroke="#333" stroke-width="0.5"/></svg>
<div class="t" style="left:609.6px;top:234.9px;font-size:8.6px;color:#eef6ff">SpacePlot_Mars</div>
<div class="a" style="left:890.7px;top:233px;width:11.6px;height:11.6px;background:#f2f2f2;border-top:1px solid #fff;border-left:1px solid #fff;border-right:1px solid #777;border-bottom:1.2px solid #666"></div>
<div class="a" style="left:904.3000000000001px;top:233px;width:11.6px;height:11.6px;background:#f2f2f2;border-top:1px solid #fff;border-left:1px solid #fff;border-right:1px solid #777;border-bottom:1.2px solid #666"></div>
<div class="a" style="left:917.6px;top:233px;width:11.6px;height:11.6px;background:#f2f2f2;border-top:1px solid #fff;border-left:1px solid #fff;border-right:1px solid #777;border-bottom:1.2px solid #666"></div>
<div class="a" style="left:894.3000000000001px;top:240.2px;width:4.4px;height:1.2px;background:#222"></div>
<div class="a" style="left:907.1px;top:235.6px;width:6.4px;height:6.2px;border:1px solid #222;border-top-width:2px"></div>
<svg class="a" style="left:917.6px;top:233px" width="12" height="12" viewBox="0 0 12 12"><path d="M3.2,3.3 L8.4,8.5 M8.4,3.3 L3.2,8.5" stroke="#222" stroke-width="1.3"/></svg><svg class="a" style="left:602px;top:252.5px" width="322.5" height="268.5" viewBox="602 252.5 322.5 268.5"><defs>
<radialGradient id="mg" cx="0.45" cy="0.42" r="0.6"><stop offset="0" stop-color="#cc8a52"/><stop offset="0.75" stop-color="#bc7844"/><stop offset="1" stop-color="#8a5430"/></radialGradient>
<filter id="sb4" x="-50%" y="-50%" width="200%" height="200%"><feGaussianBlur stdDeviation="4"/></filter>
<filter id="sb2" x="-50%" y="-50%" width="200%" height="200%"><feGaussianBlur stdDeviation="2"/></filter>
<filter id="nz" x="0" y="0" width="100%" height="100%"><feTurbulence type="fractalNoise" baseFrequency="0.6" numOctaves="2" seed="3"/><feColorMatrix values="0 0 0 0 0.3  0 0 0 0 0.18  0 0 0 0 0.08  0 0 0 -2.5 1.3"/></filter><clipPath id="gc"><circle cx="691.8" cy="374" r="45.6"/></clipPath>
</defs><rect x="602" y="252.5" width="322.5" height="268.5" fill="#000"/><circle cx="691.8" cy="374" r="45.6" fill="url(#mg)"/><g clip-path="url(#gc)"><g filter="url(#sb4)"><ellipse cx="668" cy="386" rx="18" ry="6" fill="#8a5630"/><ellipse cx="672" cy="350" rx="20" ry="14" fill="#d09460"/><ellipse cx="702" cy="372" rx="9" ry="15" fill="#8a5a38"/><ellipse cx="715" cy="395" rx="16" ry="10" fill="#a86a40"/></g><g filter="url(#sb2)"><path d="M692,352 L710,353 L713,366 L705,376 L698,392 L690,386 L688,368 Z" fill="#6a4630" opacity="0.6"/><ellipse cx="692" cy="407" rx="10" ry="6" fill="#dca878"/><ellipse cx="716" cy="349" rx="2" ry="4" fill="#5a3c28"/><ellipse cx="690" cy="339" rx="16" ry="3" fill="#a06840"/></g><circle cx="691.8" cy="374" r="45.6" filter="url(#nz)" opacity="0.3"/></g><circle cx="691.8" cy="374" r="45.6" fill="none" stroke="#000" stroke-opacity="0.25" stroke-width="3"/><g transform="translate(704.70,256.50) rotate(14.86)"><rect x="-15.21" y="-1.30" width="30.42" height="2.60" fill="#1c1c9a"/></g><rect x="702.05" y="254.25" width="4.5" height="4.14" fill="#e8b830" rx="0.67"/><rect x="702.86" y="255.24" width="1.71" height="2.25" fill="#c0c4f0"/><g transform="translate(616.50,313.25) rotate(8.82)"><rect x="-14.67" y="-1.30" width="29.35" height="2.60" fill="#1c1c9a"/></g><rect x="610.25" y="310.55" width="4.5" height="4.14" fill="#e8b830" rx="0.67"/><rect x="611.06" y="311.54" width="1.71" height="2.25" fill="#c0c4f0"/><g transform="translate(803.15,319.60) rotate(11.61)"><rect x="-12.91" y="-1.30" width="25.83" height="2.60" fill="#1c1c9a"/></g><rect x="801.75" y="317.35" width="4.5" height="4.14" fill="#e8b830" rx="0.67"/><rect x="802.56" y="318.34" width="1.71" height="2.25" fill="#c0c4f0"/><g transform="translate(757.25,343.90) rotate(7.90)"><rect x="-12.37" y="-1.30" width="24.73" height="2.60" fill="#1c1c9a"/></g><rect x="755.25" y="341.55" width="4.5" height="4.14" fill="#e8b830" rx="0.67"/><rect x="756.06" y="342.54" width="1.71" height="2.25" fill="#c0c4f0"/><g transform="translate(877.25,369.40) rotate(0.90)"><rect x="-12.75" y="-1.60" width="25.50" height="3.20" fill="#1c1c9a"/></g><rect x="875.00" y="366.90" width="5" height="4.60" fill="#e8b830" rx="0.75"/><rect x="875.90" y="368.00" width="1.90" height="2.50" fill="#c0c4f0"/><g transform="translate(760.35,452.30) rotate(-11.74)"><rect x="-37.84" y="-3.60" width="75.68" height="7.20" fill="#1c1c9a"/><line x1="-28.38" y1="-3.6" x2="-28.38" y2="3.6" stroke="#000050" stroke-width="0.5"/><line x1="-18.92" y1="-3.6" x2="-18.92" y2="3.6" stroke="#000050" stroke-width="0.5"/><line x1="-9.46" y1="-3.6" x2="-9.46" y2="3.6" stroke="#000050" stroke-width="0.5"/><line x1="0.00" y1="-3.6" x2="0.00" y2="3.6" stroke="#000050" stroke-width="0.5"/><line x1="9.46" y1="-3.6" x2="9.46" y2="3.6" stroke="#000050" stroke-width="0.5"/><line x1="18.92" y1="-3.6" x2="18.92" y2="3.6" stroke="#000050" stroke-width="0.5"/><line x1="28.38" y1="-3.6" x2="28.38" y2="3.6" stroke="#000050" stroke-width="0.5"/></g><rect x="757.25" y="445.75" width="12.5" height="11.50" fill="#e8b830" rx="1.88"/><rect x="759.50" y="448.50" width="4.75" height="6.25" fill="#c0c4f0"/><rect x="765.00" y="449.25" width="2.75" height="5.00" fill="#d8d4b0"/><g transform="translate(847.90,494.80) rotate(-21.13)"><rect x="-22.19" y="-2.60" width="44.38" height="5.20" fill="#1c1c9a"/><line x1="-16.64" y1="-2.6" x2="-16.64" y2="2.6" stroke="#000050" stroke-width="0.5"/><line x1="-11.10" y1="-2.6" x2="-11.10" y2="2.6" stroke="#000050" stroke-width="0.5"/><line x1="-5.55" y1="-2.6" x2="-5.55" y2="2.6" stroke="#000050" stroke-width="0.5"/><line x1="0.00" y1="-2.6" x2="0.00" y2="2.6" stroke="#000050" stroke-width="0.5"/><line x1="5.55" y1="-2.6" x2="5.55" y2="2.6" stroke="#000050" stroke-width="0.5"/><line x1="11.10" y1="-2.6" x2="11.10" y2="2.6" stroke="#000050" stroke-width="0.5"/><line x1="16.64" y1="-2.6" x2="16.64" y2="2.6" stroke="#000050" stroke-width="0.5"/></g><rect x="845.15" y="490.55" width="8.5" height="7.82" fill="#e8b830" rx="1.27"/><rect x="846.68" y="492.42" width="3.23" height="4.25" fill="#c0c4f0"/><rect x="850.42" y="492.93" width="1.87" height="3.40" fill="#d8d4b0"/><g transform="translate(733.75,464.70) rotate(-11.35)"><rect x="-13.72" y="-1.30" width="27.44" height="2.60" fill="#1c1c9a"/></g><rect x="732.15" y="461.95" width="4.5" height="4.14" fill="#e8b830" rx="0.67"/><rect x="732.96" y="462.94" width="1.71" height="2.25" fill="#c0c4f0"/><g transform="translate(685.25,469.00) rotate(-11.13)"><rect x="-15.54" y="-1.30" width="31.08" height="2.60" fill="#1c1c9a"/></g><rect x="683.05" y="466.55" width="4.5" height="4.14" fill="#e8b830" rx="0.67"/><rect x="683.86" y="467.54" width="1.71" height="2.25" fill="#c0c4f0"/><g transform="translate(807.95,462.00) rotate(-17.55)"><rect x="-13.27" y="-1.30" width="26.53" height="2.60" fill="#1c1c9a"/></g><rect x="806.05" y="459.35" width="4.5" height="4.14" fill="#e8b830" rx="0.67"/><rect x="806.86" y="460.34" width="1.71" height="2.25" fill="#c0c4f0"/><g transform="translate(810.50,517.50) rotate(-23.75)"><rect x="-13.66" y="-1.60" width="27.31" height="3.20" fill="#1c1c9a"/></g><rect x="804.85" y="516.75" width="5.5" height="5.06" fill="#e8b830" rx="0.82"/><rect x="805.84" y="517.96" width="2.09" height="2.75" fill="#c0c4f0"/><path d="M602,457.6 L617.5,453.4" stroke="#1c1c9a" stroke-width="2.6"/></svg><div class="a" style="left:935.8px;top:57px;width:344.2px;height:237px;background:#dcdcfc;border-left:2px solid #f8f8f8;border-top:2px solid #f8f8f8;border-right:2px solid #7a7a7a;border-bottom:2px solid #7a7a7a;box-shadow:inset -1.3px -1.3px 0 #fafafa"></div>
<div class="a" style="left:937.8px;top:59px;width:337.9px;height:14.5px;background:#a0a0a0"></div>
<svg class="a" style="left:939.8px;top:61px" width="11" height="11" viewBox="0 0 11 11"><rect x="0.6" y="0.6" width="9.8" height="9.8" rx="1" fill="#ccccff" stroke="#2a2a3a" stroke-width="1.1"/><line x1="1.8" y1="9.2" x2="9.2" y2="1.8" stroke="#222" stroke-width="2.2"/><line x1="1.8" y1="9.2" x2="9.2" y2="1.8" stroke="#f4f4f4" stroke-width="1.1"/><ellipse cx="5.5" cy="5.5" rx="2.3" ry="1.7" transform="rotate(-45 5.5 5.5)" fill="#f4f000" stroke="#333" stroke-width="0.5"/></svg>
<div class="t" style="left:952.4px;top:62.9px;font-size:8.6px;color:#e2e4ee">PolarPlot_Mars</div>
<div class="a" style="left:1235.6999999999998px;top:61px;width:11.6px;height:11.6px;background:#f2f2f2;border-top:1px solid #fff;border-left:1px solid #fff;border-right:1px solid #777;border-bottom:1.2px solid #666"></div>
<div class="a" style="left:1249.2999999999997px;top:61px;width:11.6px;height:11.6px;background:#f2f2f2;border-top:1px solid #fff;border-left:1px solid #fff;border-right:1px solid #777;border-bottom:1.2px solid #666"></div>
<div class="a" style="left:1262.6px;top:61px;width:11.6px;height:11.6px;background:#f2f2f2;border-top:1px solid #fff;border-left:1px solid #fff;border-right:1px solid #777;border-bottom:1.2px solid #666"></div>
<div class="a" style="left:1239.2999999999997px;top:68.2px;width:4.4px;height:1.2px;background:#222"></div>
<div class="a" style="left:1252.0999999999997px;top:63.6px;width:6.4px;height:6.2px;border:1px solid #222;border-top-width:2px"></div>
<svg class="a" style="left:1262.6px;top:61px" width="12" height="12" viewBox="0 0 12 12"><path d="M3.2,3.3 L8.4,8.5 M8.4,3.3 L3.2,8.5" stroke="#222" stroke-width="1.3"/></svg><svg class="a" style="left:945px;top:80.2px" width="192.6" height="203.8" viewBox="945 80.2 192.6 203.8"><rect x="945" y="80.2" width="192.6" height="203.8" fill="#000"/><ellipse cx="1041.1" cy="194" rx="74.8" ry="35.2" fill="#8e6a4a"/><ellipse cx="1041.1" cy="191" rx="74.8" ry="35.1" fill="#c89868"/><ellipse cx="1041.1" cy="191" rx="73" ry="34" fill="none" stroke="#7a6050" stroke-width="0.8"/><ellipse cx="1041.1" cy="190" rx="65.6" ry="29" fill="none" stroke="#5e4a3a" stroke-width="0.9"/><ellipse cx="1041.1" cy="187.4" rx="53.4" ry="23.4" fill="none" stroke="#1a120a" stroke-width="1.3"/><ellipse cx="1041.1" cy="183.9" rx="37.1" ry="16.8" fill="none" stroke="#5e4a3a" stroke-width="0.9"/><ellipse cx="1041.1" cy="181.9" rx="19.3" ry="8.6" fill="none" stroke="#5e4a3a" stroke-width="0.9"/><line x1="1041.1" y1="156" x2="1041.1" y2="226.5" stroke="#2a2018" stroke-width="1.1"/><clipPath id="dc"><ellipse cx="1041.1" cy="191" rx="73.5" ry="34.5"/></clipPath><g clip-path="url(#dc)"><line x1="960" y1="181.4" x2="1120" y2="181.4" stroke="#4a3a2a" stroke-width="0.8"/><line x1="960" y1="153" x2="1122" y2="215" stroke="#5e4a3a" stroke-width="0.7"/><line x1="1122" y1="153" x2="960" y2="215" stroke="#5e4a3a" stroke-width="0.7"/></g><ellipse cx="999.5" cy="172.6" rx="3.2" ry="1.8" fill="#b8b8f0"/><line x1="995.2" y1="123" x2="999.5" y2="172.6" stroke="#c8c8f4" stroke-width="1"/><line x1="979.6" y1="123" x2="1010" y2="123" stroke="#14148c" stroke-width="0.9" stroke-dasharray="3 2"/><circle cx="995.2" cy="123" r="2.3" fill="#d8b040" stroke="#8a6a10" stroke-width="0.4"/><ellipse cx="1014.1" cy="189.5" rx="3.6" ry="2.1" fill="#b8b8f0"/><line x1="1010.1" y1="118.3" x2="1014.1" y2="189.5" stroke="#c8c8f4" stroke-width="1"/><line x1="991.8" y1="118.3" x2="1028.8" y2="118.3" stroke="#14148c" stroke-width="0.9" stroke-dasharray="3 2"/><circle cx="1010.1" cy="118.3" r="2.3" fill="#d8b040" stroke="#8a6a10" stroke-width="0.4"/><ellipse cx="1016.8" cy="158" rx="3" ry="1.6" fill="#b8b8f0"/><line x1="1016.6" y1="152.5" x2="1016.8" y2="158" stroke="#c8c8f4" stroke-width="1"/><line x1="1004" y1="152.5" x2="1028.8" y2="152.5" stroke="#14148c" stroke-width="0.9" stroke-dasharray="3 2"/><circle cx="1016.6" cy="152.5" r="2.3" fill="#d8b040" stroke="#8a6a10" stroke-width="0.4"/><ellipse cx="1071.5" cy="182.4" rx="3.8" ry="2.2" fill="#b8b8f0"/><line x1="1075.8" y1="114.8" x2="1071.5" y2="182.4" stroke="#c8c8f4" stroke-width="1"/><line x1="1057.9" y1="114.8" x2="1093" y2="114.8" stroke="#14148c" stroke-width="0.9" stroke-dasharray="3 2"/><circle cx="1075.8" cy="114.8" r="2.3" fill="#d8b040" stroke="#8a6a10" stroke-width="0.4"/><ellipse cx="1089.4" cy="174.8" rx="3.4" ry="1.9" fill="#b8b8f0"/><line x1="1093.9" y1="128.9" x2="1089.4" y2="174.8" stroke="#c8c8f4" stroke-width="1"/><line x1="1078.2" y1="128.9" x2="1109.3" y2="128.9" stroke="#14148c" stroke-width="0.9" stroke-dasharray="3 2"/><circle cx="1093.9" cy="128.9" r="2.3" fill="#d8b040" stroke="#8a6a10" stroke-width="0.4"/><ellipse cx="970.4" cy="202.1" rx="4.2" ry="2.5" fill="#b8b8f0"/><line x1="968.4" y1="189.1" x2="970.4" y2="202.1" stroke="#c8c8f4" stroke-width="1"/><line x1="950" y1="189.1" x2="986.7" y2="189.1" stroke="#14148c" stroke-width="0.9" stroke-dasharray="3 2"/><circle cx="968.4" cy="189.1" r="2.3" fill="#d8b040" stroke="#8a6a10" stroke-width="0.4"/><ellipse cx="1074.6" cy="221" rx="4.8" ry="2.9" fill="#b8b8f0"/><line x1="1075.8" y1="205.1" x2="1074.6" y2="221" stroke="#c8c8f4" stroke-width="1"/><line x1="1054.8" y1="205.1" x2="1096.5" y2="205.1" stroke="#14148c" stroke-width="1.8" stroke-dasharray="4 2.5"/><circle cx="1075.8" cy="205.1" r="2.6" fill="#d8b040" stroke="#8a6a10" stroke-width="0.4"/></svg><div class="a" style="left:1144px;top:80.8px;width:126.8px;height:14px;background:#fff"></div><div class="t" style="left:1175.9px;top:84.4px;font-size:8.6px;color:#222">Selector/Legend</div><div class="a" style="left:1144px;top:94px;width:126.8px;height:157.2px;background:#efefef;border-left:1.5px solid #777;border-top:1.5px solid #777"></div><svg class="a" style="left:1146px;top:96px" width="20" height="12" viewBox="1146 96 20 12"><circle cx="1150.6" cy="100.8" r="2.3" fill="#111"/><circle cx="1158.9" cy="101.5" r="2.8" fill="#fafafa" stroke="#999" stroke-width="0.8"/><circle cx="1158.9" cy="101.5" r="1.2" fill="#111"/></svg><div class="t" style="left:1167.6px;top:98.2px;font-size:8.6px;color:#111">SFM-A01</div><div class="a" style="left:1144px;top:257.1px;width:126.8px;height:26.4px;background:#fff"></div><svg class="a" style="left:1144px;top:257px" width="127" height="27" viewBox="1144 257 127 27"><path d="M1154.2,270.6 L1202.2,260.3 L1207.5,270.6 Z" fill="#0000c8" stroke="#222" stroke-width="0.5"/><path d="M1208,270.6 L1260.8,270.6 L1212.8,281.4 Z" fill="#0000c8" stroke="#222" stroke-width="0.5"/></svg><div class="t" style="left:1211.7px;top:261.3px;font-size:8.6px;color:#222">Nav</div><div class="t" style="left:1179px;top:273.9px;font-size:8.6px;color:#222">Studio</div><div class="a" style="left:935.8px;top:293.5px;width:344.2px;height:236.5px;background:#dcdcfc;border-left:2px solid #f8f8f8;border-top:2px solid #f8f8f8;border-right:2px solid #7a7a7a;border-bottom:2px solid #7a7a7a;box-shadow:inset -1.3px -1.3px 0 #fafafa"></div>
<div class="a" style="left:937.8px;top:295.5px;width:337.9px;height:14.5px;background:#a0a0a0"></div>
<svg class="a" style="left:939.8px;top:297.5px" width="11" height="11" viewBox="0 0 11 11"><rect x="0.6" y="0.6" width="9.8" height="9.8" rx="1" fill="#ccccff" stroke="#2a2a3a" stroke-width="1.1"/><line x1="1.8" y1="9.2" x2="9.2" y2="1.8" stroke="#222" stroke-width="2.2"/><line x1="1.8" y1="9.2" x2="9.2" y2="1.8" stroke="#f4f4f4" stroke-width="1.1"/><ellipse cx="5.5" cy="5.5" rx="2.3" ry="1.7" transform="rotate(-45 5.5 5.5)" fill="#f4f000" stroke="#333" stroke-width="0.5"/></svg>
<div class="t" style="left:952.4px;top:299.4px;font-size:8.6px;color:#e2e4ee">Observations</div>
<div class="a" style="left:1235.6999999999998px;top:297.5px;width:11.6px;height:11.6px;background:#f2f2f2;border-top:1px solid #fff;border-left:1px solid #fff;border-right:1px solid #777;border-bottom:1.2px solid #666"></div>
<div class="a" style="left:1249.2999999999997px;top:297.5px;width:11.6px;height:11.6px;background:#f2f2f2;border-top:1px solid #fff;border-left:1px solid #fff;border-right:1px solid #777;border-bottom:1.2px solid #666"></div>
<div class="a" style="left:1262.6px;top:297.5px;width:11.6px;height:11.6px;background:#f2f2f2;border-top:1px solid #fff;border-left:1px solid #fff;border-right:1px solid #777;border-bottom:1.2px solid #666"></div>
<div class="a" style="left:1239.2999999999997px;top:304.7px;width:4.4px;height:1.2px;background:#222"></div>
<div class="a" style="left:1252.0999999999997px;top:300.1px;width:6.4px;height:6.2px;border:1px solid #222;border-top-width:2px"></div>
<svg class="a" style="left:1262.6px;top:297.5px" width="12" height="12" viewBox="0 0 12 12"><path d="M3.2,3.3 L8.4,8.5 M8.4,3.3 L3.2,8.5" stroke="#222" stroke-width="1.3"/></svg><div class="a" style="left:945px;top:317.8px;width:324.4px;height:201.2px;background:#fff;border-left:1.5px solid #6e6e6e;border-top:1.5px solid #6e6e6e;overflow:hidden"><div class="a" style="left:0.0px;top:0;width:27.5px;height:15.5px;background:#f0f0f0;border-top:1px solid #fff;border-left:1px solid #fff;border-right:1.5px solid #8a8a8a;border-bottom:1.5px solid #8a8a8a"></div><div class="t" style="left:2.2000000000000455px;top:4.2px;font-size:8.6px;color:#2a2a3a">#</div><div class="a" style="left:27.5px;top:0;width:46.39999999999998px;height:15.5px;background:#f0f0f0;border-top:1px solid #fff;border-left:1px solid #fff;border-right:1.5px solid #8a8a8a;border-bottom:1.5px solid #8a8a8a"></div><div class="t" style="left:30.799999999999955px;top:4.2px;font-size:8.6px;color:#2a2a3a">SatId</div><div class="a" style="left:73.89999999999998px;top:0;width:33.69999999999993px;height:15.5px;background:#f0f0f0;border-top:1px solid #fff;border-left:1px solid #fff;border-right:1.5px solid #8a8a8a;border-bottom:1.5px solid #8a8a8a"></div><div class="t" style="left:77.20000000000005px;top:4.2px;font-size:8.6px;color:#2a2a3a">Signal</div><div class="a" style="left:107.59999999999991px;top:0;width:66.5px;height:15.5px;background:#f0f0f0;border-top:1px solid #fff;border-left:1px solid #fff;border-right:1.5px solid #8a8a8a;border-bottom:1.5px solid #8a8a8a"></div><div class="t" style="left:110.40000000000009px;top:4.2px;font-size:8.6px;color:#2a2a3a">Range [m]</div><div class="a" style="left:174.0999999999999px;top:0;width:66.80000000000018px;height:15.5px;background:#f0f0f0;border-top:1px solid #fff;border-left:1px solid #fff;border-right:1.5px solid #8a8a8a;border-bottom:1.5px solid #8a8a8a"></div><div class="t" style="left:177.5px;top:4.2px;font-size:8.6px;color:#2a2a3a">Phase [cyc]</div><div class="a" style="left:240.9000000000001px;top:0;width:60.09999999999991px;height:15.5px;background:#f0f0f0;border-top:1px solid #fff;border-left:1px solid #fff;border-right:1.5px solid #8a8a8a;border-bottom:1.5px solid #8a8a8a"></div><div class="t" style="left:244.20000000000005px;top:4.2px;font-size:8.6px;color:#2a2a3a">Doppler [Hz]</div><div class="a" style="left:301.0px;top:0;width:52.5px;height:15.5px;background:#f0f0f0;border-top:1px solid #fff;border-left:1px solid #fff;border-right:1.5px solid #8a8a8a;border-bottom:1.5px solid #8a8a8a"></div><div class="t" style="left:304.0px;top:4.2px;font-size:8.6px;color:#2a2a3a">Power [dBHz]</div><div class="t" style="left:14.799999999999955px;top:15.80px;font-size:8.6px">1</div><div class="t" style="left:30.799999999999955px;top:15.80px;font-size:8.6px">MPS-M01</div><div class="t" style="left:77.20000000000005px;top:15.80px;font-size:8.6px">L1</div><div class="t" style="left:110.40000000000009px;top:15.80px;font-size:8.6px">21971642.181</div><div class="t" style="left:177.5px;top:15.80px;font-size:8.6px">115461759.400</div><div class="t" style="left:244.20000000000005px;top:15.80px;font-size:8.6px">64.820</div><div class="t" style="left:304.0px;top:15.80px;font-size:8.6px">47.05</div><div class="t" style="left:14.799999999999955px;top:25.77px;font-size:8.6px">2</div><div class="t" style="left:30.799999999999955px;top:25.77px;font-size:8.6px">MPS-M02</div><div class="t" style="left:77.20000000000005px;top:25.77px;font-size:8.6px">L1</div><div class="t" style="left:110.40000000000009px;top:25.77px;font-size:8.6px">26909308.820</div><div class="t" style="left:177.5px;top:25.77px;font-size:8.6px">141409372.570</div><div class="t" style="left:244.20000000000005px;top:25.77px;font-size:8.6px">-121.280</div><div class="t" style="left:304.0px;top:25.77px;font-size:8.6px">45.29</div><div class="t" style="left:14.799999999999955px;top:35.74px;font-size:8.6px">3</div><div class="t" style="left:30.799999999999955px;top:35.74px;font-size:8.6px">MPS-M05</div><div class="t" style="left:77.20000000000005px;top:35.74px;font-size:8.6px">L1</div><div class="t" style="left:110.40000000000009px;top:35.74px;font-size:8.6px">23259217.925</div><div class="t" style="left:177.5px;top:35.74px;font-size:8.6px">122228015.191</div><div class="t" style="left:244.20000000000005px;top:35.74px;font-size:8.6px">580.763</div><div class="t" style="left:304.0px;top:35.74px;font-size:8.6px">46.56</div><div class="t" style="left:14.799999999999955px;top:45.71px;font-size:8.6px">4</div><div class="t" style="left:30.799999999999955px;top:45.71px;font-size:8.6px">MPS-M08</div><div class="t" style="left:77.20000000000005px;top:45.71px;font-size:8.6px">L1</div><div class="t" style="left:110.40000000000009px;top:45.71px;font-size:8.6px">26957769.971</div><div class="t" style="left:177.5px;top:45.71px;font-size:8.6px">141664036.593</div><div class="t" style="left:244.20000000000005px;top:45.71px;font-size:8.6px">1075.306</div><div class="t" style="left:304.0px;top:45.71px;font-size:8.6px">45.28</div><div class="t" style="left:14.799999999999955px;top:55.68px;font-size:8.6px">5</div><div class="t" style="left:30.799999999999955px;top:55.68px;font-size:8.6px">MPS-M09</div><div class="t" style="left:77.20000000000005px;top:55.68px;font-size:8.6px">L1</div><div class="t" style="left:110.40000000000009px;top:55.68px;font-size:8.6px">26986849.662</div><div class="t" style="left:177.5px;top:55.68px;font-size:8.6px">141816851.387</div><div class="t" style="left:244.20000000000005px;top:55.68px;font-size:8.6px">450.358</div><div class="t" style="left:304.0px;top:55.68px;font-size:8.6px">45.27</div><div class="t" style="left:14.799999999999955px;top:65.65px;font-size:8.6px">6</div><div class="t" style="left:30.799999999999955px;top:65.65px;font-size:8.6px">MPS-M13</div><div class="t" style="left:77.20000000000005px;top:65.65px;font-size:8.6px">L1</div><div class="t" style="left:110.40000000000009px;top:65.65px;font-size:8.6px">26790306.473</div><div class="t" style="left:177.5px;top:65.65px;font-size:8.6px">140784010.503</div><div class="t" style="left:244.20000000000005px;top:65.65px;font-size:8.6px">-9.851</div><div class="t" style="left:304.0px;top:65.65px;font-size:8.6px">45.33</div><div class="t" style="left:14.799999999999955px;top:75.62px;font-size:8.6px">7</div><div class="t" style="left:30.799999999999955px;top:75.62px;font-size:8.6px">MPS-M14</div><div class="t" style="left:77.20000000000005px;top:75.62px;font-size:8.6px">L1</div><div class="t" style="left:110.40000000000009px;top:75.62px;font-size:8.6px">26245615.678</div><div class="t" style="left:177.5px;top:75.62px;font-size:8.6px">137921640.571</div><div class="t" style="left:244.20000000000005px;top:75.62px;font-size:8.6px">-1924.686</div><div class="t" style="left:304.0px;top:75.62px;font-size:8.6px">45.51</div><div class="t" style="left:14.799999999999955px;top:85.59px;font-size:8.6px">8</div><div class="t" style="left:30.799999999999955px;top:85.59px;font-size:8.6px">MPS-M17</div><div class="t" style="left:77.20000000000005px;top:85.59px;font-size:8.6px">L1</div><div class="t" style="left:110.40000000000009px;top:85.59px;font-size:8.6px">22931446.996</div><div class="t" style="left:177.5px;top:85.59px;font-size:8.6px">120505566.763</div><div class="t" style="left:244.20000000000005px;top:85.59px;font-size:8.6px">-196.108</div><div class="t" style="left:304.0px;top:85.59px;font-size:8.6px">46.68</div><div class="t" style="left:14.799999999999955px;top:95.56px;font-size:8.6px">9</div><div class="t" style="left:30.799999999999955px;top:95.56px;font-size:8.6px">MPS-M18</div><div class="t" style="left:77.20000000000005px;top:95.56px;font-size:8.6px">L1</div><div class="t" style="left:110.40000000000009px;top:95.56px;font-size:8.6px">26098775.610</div><div class="t" style="left:177.5px;top:95.56px;font-size:8.6px">137149991.591</div><div class="t" style="left:244.20000000000005px;top:95.56px;font-size:8.6px">-825.354</div><div class="t" style="left:304.0px;top:95.56px;font-size:8.6px">45.56</div><div class="t" style="left:14.799999999999955px;top:105.53px;font-size:8.6px">10</div><div class="t" style="left:30.799999999999955px;top:105.53px;font-size:8.6px">MPS-M21</div><div class="t" style="left:77.20000000000005px;top:105.53px;font-size:8.6px">L1</div><div class="t" style="left:110.40000000000009px;top:105.53px;font-size:8.6px">21979171.648</div><div class="t" style="left:177.5px;top:105.53px;font-size:8.6px">115501325.516</div><div class="t" style="left:244.20000000000005px;top:105.53px;font-size:8.6px">65.184</div><div class="t" style="left:304.0px;top:105.53px;font-size:8.6px">47.05</div><div class="t" style="left:14.799999999999955px;top:115.50px;font-size:8.6px">11</div><div class="t" style="left:30.799999999999955px;top:115.50px;font-size:8.6px">MPS-M24</div><div class="t" style="left:77.20000000000005px;top:115.50px;font-size:8.6px">L1</div><div class="t" style="left:110.40000000000009px;top:115.50px;font-size:8.6px">26953969.128</div><div class="t" style="left:177.5px;top:115.50px;font-size:8.6px">141644062.831</div><div class="t" style="left:244.20000000000005px;top:115.50px;font-size:8.6px">-39.127</div><div class="t" style="left:304.0px;top:115.50px;font-size:8.6px">45.28</div><svg class="a" style="left:0;top:0" width="20" height="130" viewBox="945.5 319.3 20 130"><line x1="952.9" y1="334" x2="952.9" y2="439" stroke="#c4c4c4" stroke-width="0.8"/><line x1="952.9" y1="338.80" x2="959" y2="338.80" stroke="#c4c4c4" stroke-width="0.8"/><line x1="952.9" y1="348.77" x2="959" y2="348.77" stroke="#c4c4c4" stroke-width="0.8"/><line x1="952.9" y1="358.74" x2="959" y2="358.74" stroke="#c4c4c4" stroke-width="0.8"/><line x1="952.9" y1="368.71" x2="959" y2="368.71" stroke="#c4c4c4" stroke-width="0.8"/><line x1="952.9" y1="378.68" x2="959" y2="378.68" stroke="#c4c4c4" stroke-width="0.8"/><line x1="952.9" y1="388.65" x2="959" y2="388.65" stroke="#c4c4c4" stroke-width="0.8"/><line x1="952.9" y1="398.62" x2="959" y2="398.62" stroke="#c4c4c4" stroke-width="0.8"/><line x1="952.9" y1="408.59" x2="959" y2="408.59" stroke="#c4c4c4" stroke-width="0.8"/><line x1="952.9" y1="418.56" x2="959" y2="418.56" stroke="#c4c4c4" stroke-width="0.8"/><line x1="952.9" y1="428.53" x2="959" y2="428.53" stroke="#c4c4c4" stroke-width="0.8"/><line x1="952.9" y1="438.50" x2="959" y2="438.50" stroke="#c4c4c4" stroke-width="0.8"/></svg></div><div class="a" style="left:945.8px;top:507.7px;width:323.5px;height:11.2px;background:#f6f6f6"></div><div class="a" style="left:945.8px;top:507.7px;width:11.5px;height:11.2px;background:#f2f2f2;border-right:1px solid #8a8a8a;border-bottom:1px solid #8a8a8a"></div><div class="a" style="left:957.3px;top:507.7px;width:267.4px;height:11.2px;background:#ececec;border-right:1.2px solid #8a8a8a;border-bottom:1px solid #8a8a8a"></div><div class="a" style="left:1258.2px;top:507.7px;width:11.1px;height:11.2px;background:#f2f2f2;border-right:1px solid #8a8a8a;border-bottom:1px solid #8a8a8a"></div><svg class="a" style="left:945px;top:507px" width="325" height="13" viewBox="945 507 325 13"><path d="M953.6,510.6 L953.6,515.4 L950.8,513 Z" fill="#111"/><path d="M1262.3,510.6 L1262.3,515.4 L1265.1,513 Z" fill="#111"/></svg>
</body></html>
